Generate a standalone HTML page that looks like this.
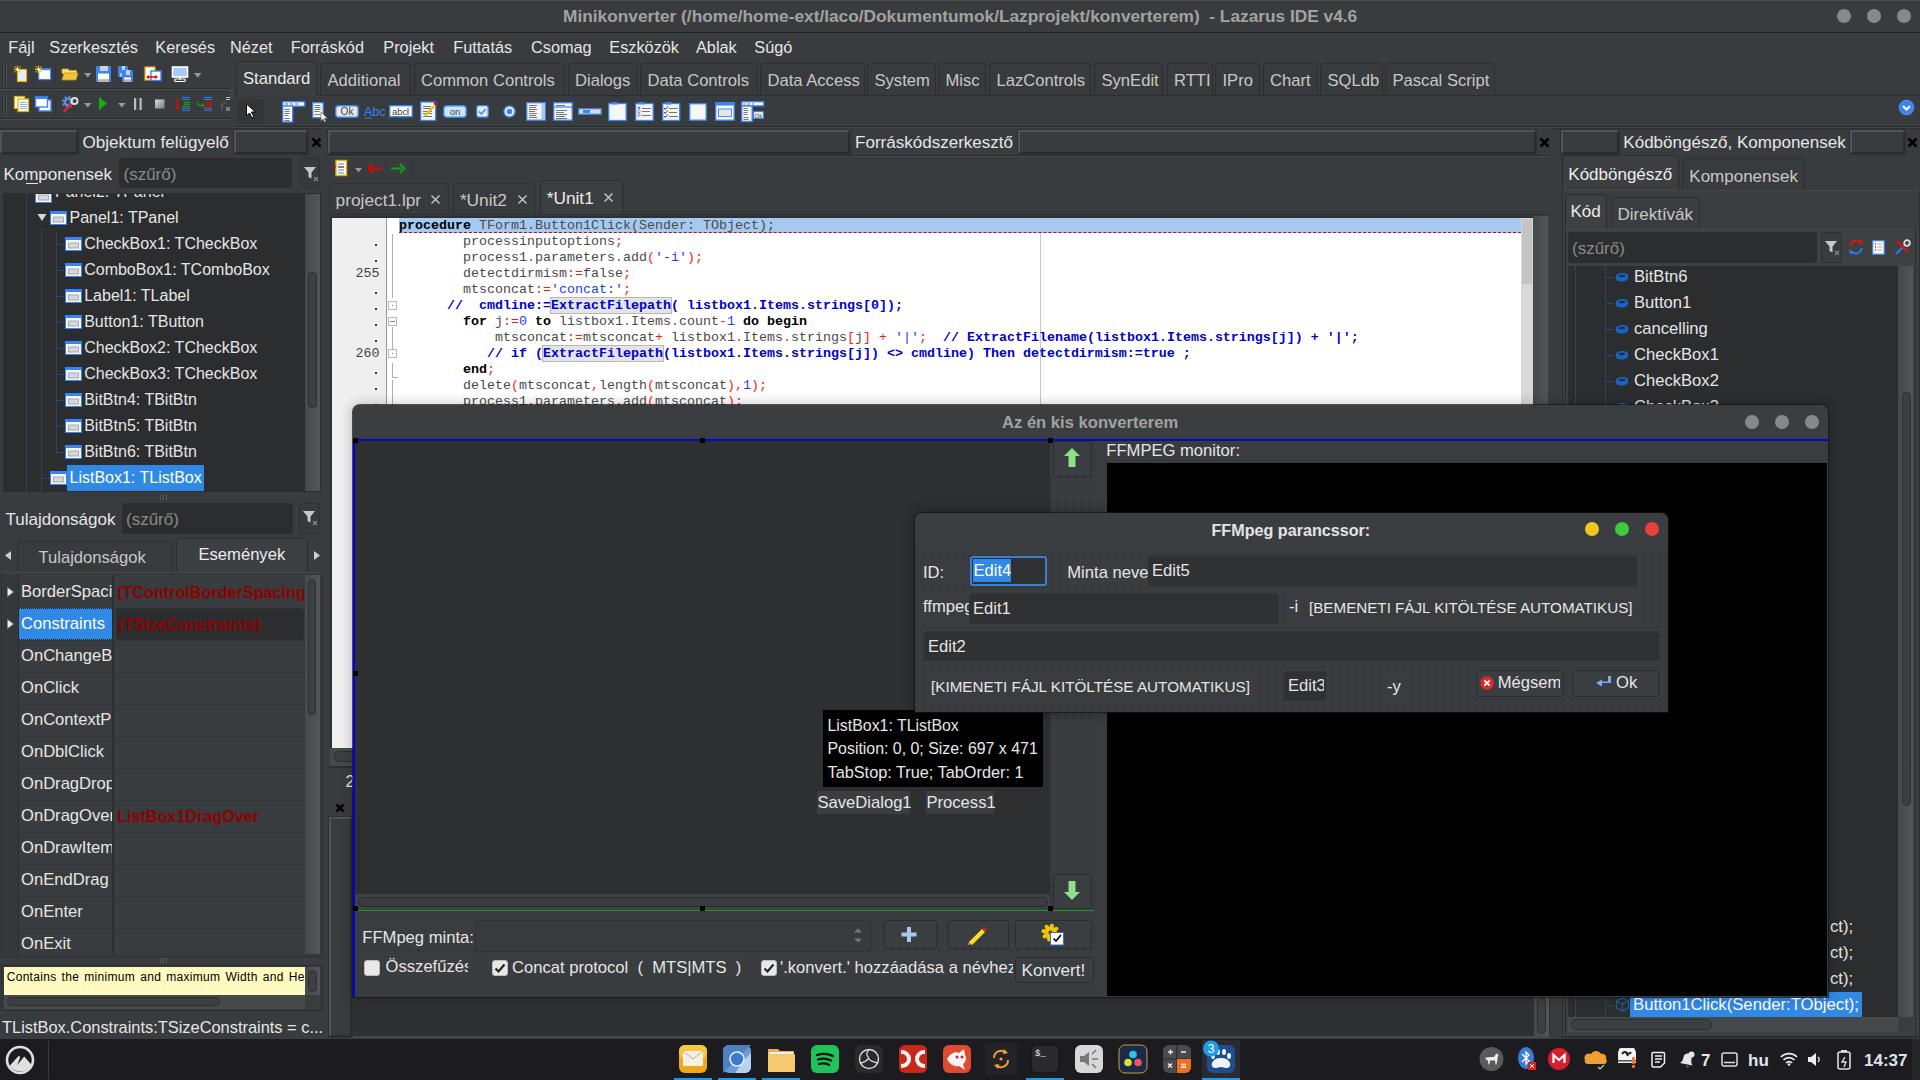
<!DOCTYPE html>
<html><head><meta charset="utf-8">
<style>
*{margin:0;padding:0;box-sizing:border-box}
html,body{width:1920px;height:1080px;overflow:hidden}
body{position:relative;background:#393c3e;font-family:"Liberation Sans",sans-serif;color:#e6e6e6;font-size:16px}
.a{position:absolute}
svg.a{overflow:visible}
.t{position:absolute;white-space:nowrap;line-height:1}
.m{position:absolute;white-space:pre;line-height:1;font-family:"Liberation Mono",monospace;font-size:13.33px;color:#2a2a2a}
.hb{position:absolute;border:2px solid #2a2c2e;border-top-color:#505456;border-left-color:#505456;background:#393c3e;outline:1px solid #2e3133}
.dots{background-color:#3a3d3f;background-image:radial-gradient(circle at 1px 1px,#151515 0.85px,transparent 1.15px);background-size:8px 8px}
.tab{position:absolute;background:#3a3d3f;border:1px solid #2c2e30;border-bottom:none;border-radius:4px 4px 0 0}
.circ{position:absolute;border-radius:50%}
.fld{position:absolute;background:#2b2d2f;border-radius:3px}
.btn{position:absolute;background:#3b3e40;border:1px solid #2a2c2e;border-radius:3px;box-shadow:inset 0 1px 0 #464a4c}
b{font-weight:bold}
</style></head><body>

<div class="a" style="left:0px;top:0px;width:1920px;height:1px;background:#4b4e50;"></div>
<div class="a" style="left:0px;top:32px;width:1920px;height:1px;background:#1f2123;"></div>
<div class="t" style="left:563px;top:8.3px;font-size:17.3px;color:#a2a2a2;font-weight:bold;">Minikonverter (/home/home-ext/laco/Dokumentumok/Lazprojekt/konverterem)  - Lazarus IDE v4.6</div>
<div class="circ" style="left:1837px;top:9px;width:14px;height:14px;background:#888"></div>
<div class="circ" style="left:1867px;top:9px;width:14px;height:14px;background:#888"></div>
<div class="circ" style="left:1897px;top:9px;width:14px;height:14px;background:#888"></div>
<div class="t" style="left:8.3px;top:39.0px;font-size:16.3px;">Fájl</div>
<div class="t" style="left:49.3px;top:39.0px;font-size:16.3px;">Szerkesztés</div>
<div class="t" style="left:155.3px;top:39.0px;font-size:16.3px;">Keresés</div>
<div class="t" style="left:230px;top:39.0px;font-size:16.3px;">Nézet</div>
<div class="t" style="left:290.7px;top:39.0px;font-size:16.3px;">Forráskód</div>
<div class="t" style="left:383.3px;top:39.0px;font-size:16.3px;">Projekt</div>
<div class="t" style="left:453.3px;top:39.0px;font-size:16.3px;">Futtatás</div>
<div class="t" style="left:531px;top:39.0px;font-size:16.3px;">Csomag</div>
<div class="t" style="left:609.3px;top:39.0px;font-size:16.3px;">Eszközök</div>
<div class="t" style="left:696px;top:39.0px;font-size:16.3px;">Ablak</div>
<div class="t" style="left:754.3px;top:39.0px;font-size:16.3px;">Súgó</div>
<div class="a" style="left:2px;top:62px;width:1px;height:24px;background:#2c2e30;"></div>
<div class="a" style="left:3px;top:62px;width:1px;height:24px;background:#4a4e50;"></div>
<div class="a" style="left:5px;top:62px;width:1px;height:24px;background:#2c2e30;"></div>
<div class="a" style="left:6px;top:62px;width:1px;height:24px;background:#4a4e50;"></div>
<div class="a" style="left:2px;top:92px;width:1px;height:24px;background:#2c2e30;"></div>
<div class="a" style="left:3px;top:92px;width:1px;height:24px;background:#4a4e50;"></div>
<div class="a" style="left:5px;top:92px;width:1px;height:24px;background:#2c2e30;"></div>
<div class="a" style="left:6px;top:92px;width:1px;height:24px;background:#4a4e50;"></div>
<div class="a" style="left:0px;top:88px;width:230px;height:1px;background:#2a2c2e;"></div>
<div class="a" style="left:0px;top:89px;width:230px;height:1px;background:#4a4e50;"></div>
<div class="a" style="left:0px;top:118px;width:230px;height:1px;background:#2a2c2e;"></div>
<div class="a" style="left:0px;top:119px;width:230px;height:1px;background:#4a4e50;"></div>
<div class="a" style="left:55px;top:64px;width:1px;height:22px;background:#333638;"></div>
<div class="a" style="left:138px;top:64px;width:1px;height:22px;background:#333638;"></div>
<div class="a" style="left:165px;top:64px;width:1px;height:22px;background:#333638;"></div>
<div class="a" style="left:55px;top:94px;width:1px;height:22px;background:#333638;"></div>
<svg class="a" style="left:13px;top:65px;" width="16" height="18" viewBox="0 0 16 18"><rect x="4.5" y="4.5" width="9" height="12" fill="#e6eefa" stroke="#e6b000" stroke-width="1.2"/><path d="M0.8000000000000003 4.4H8.0M4.4 0.8000000000000003V8.0" stroke="#e8b800" stroke-width="1.3"/><circle cx="2.1000000000000005" cy="2.1000000000000005" r="0.8" fill="#e8b800"/><circle cx="6.7" cy="2.1000000000000005" r="0.8" fill="#e8b800"/><circle cx="2.1000000000000005" cy="6.7" r="0.8" fill="#e8b800"/><circle cx="6.7" cy="6.7" r="0.8" fill="#e8b800"/><circle cx="4.4" cy="4.4" r="1.3" fill="#fff8d0"/></svg>
<svg class="a" style="left:34px;top:65px;" width="18" height="16" viewBox="0 0 18 16"><rect x="4.6" y="3.6" width="12" height="11" fill="#fff" stroke="#3a83f5" stroke-width="1.2"/><rect x="4" y="3" width="13" height="2.2" fill="#3a83f5"/><path d="M0.8999999999999999 4.4H8.1M4.5 0.8000000000000003V8.0" stroke="#e8b800" stroke-width="1.3"/><circle cx="2.2" cy="2.1000000000000005" r="0.8" fill="#e8b800"/><circle cx="6.8" cy="2.1000000000000005" r="0.8" fill="#e8b800"/><circle cx="2.2" cy="6.7" r="0.8" fill="#e8b800"/><circle cx="6.8" cy="6.7" r="0.8" fill="#e8b800"/><circle cx="4.5" cy="4.4" r="1.3" fill="#fff8d0"/></svg>
<svg class="a" style="left:61px;top:67px;" width="18" height="14" viewBox="0 0 18 14"><path d="M1 2h6l1.5 1.5h7v3H1z" fill="#f3dc8a" stroke="#d9a800" stroke-width="0.8"/><path d="M1 13l2-7h14l-2 7z" fill="#ecc440" stroke="#c99a00" stroke-width="0.8"/></svg>
<svg class="a" style="left:83.75px;top:73.25px;" width="7.5" height="4.5" viewBox="0 0 7.5 4.5"><path d="M0 0L7.5 0L3.75 4.5Z" fill="#9a9a9a"/></svg>
<svg class="a" style="left:95px;top:65px;" width="17" height="18" viewBox="0 0 17 18"><rect x="1" y="1" width="15" height="16" rx="1" fill="#3a83f5"/><rect x="5" y="1" width="8" height="5" fill="#cfd3d8"/><rect x="3" y="8.5" width="11" height="8" fill="#fff"/><rect x="3" y="14.5" width="11" height="1.2" fill="#f07020"/></svg>
<svg class="a" style="left:117px;top:65px;" width="17" height="18" viewBox="0 0 17 18"><rect x="1" y="1" width="10" height="11" rx="1" fill="#3a83f5"/><rect x="5" y="1" width="3" height="5" fill="#cfd3d8"/><rect x="3" y="8.5" width="6" height="3" fill="#fff"/><rect x="3" y="9.5" width="6" height="1.2" fill="#f07020"/><rect x="5" y="5" width="11" height="12" rx="1" fill="#3a83f5"/><rect x="9" y="5" width="4" height="5" fill="#cfd3d8"/><rect x="7" y="12.5" width="7" height="4" fill="#fff"/><rect x="7" y="14.5" width="7" height="1.2" fill="#f07020"/></svg>
<svg class="a" style="left:144px;top:66px;" width="18" height="16" viewBox="0 0 18 16"><rect x="1" y="1" width="10" height="13" fill="#fff" stroke="#e6b000" stroke-width="1.2"/><rect x="7" y="5" width="10" height="9.5" fill="#fff" stroke="#3a83f5" stroke-width="1.4"/><path d="M3 11h10" stroke="#e00" stroke-width="1.5"/><path d="M2 11l3-2v4zM14 11l-3-2v4z" fill="#e00"/></svg>
<svg class="a" style="left:171px;top:66px;" width="18" height="16" viewBox="0 0 18 16"><rect x="1.5" y="1" width="15" height="10" fill="#a8c8f8" stroke="#fff" stroke-width="1.6"/><path d="M9 11v2.5" stroke="#fff" stroke-width="1.5"/><rect x="3.5" y="13" width="11" height="2.5" rx="1.2" fill="none" stroke="#fff" stroke-width="1.2"/></svg>
<svg class="a" style="left:193.75px;top:73.25px;" width="7.5" height="4.5" viewBox="0 0 7.5 4.5"><path d="M0 0L7.5 0L3.75 4.5Z" fill="#9a9a9a"/></svg>
<svg class="a" style="left:13px;top:95px;" width="17" height="18" viewBox="0 0 17 18"><rect x="1.5" y="1.5" width="10" height="12" fill="#fff" stroke="#e6b000" stroke-width="1.3"/><rect x="5" y="4" width="10.5" height="12.5" fill="#fff" stroke="#e6b000" stroke-width="1.3"/><path d="M7 7.5h7M7 9.5h7M7 11.5h7M7 13.5h7" stroke="#6a9ef0" stroke-width="0.8"/></svg>
<svg class="a" style="left:34px;top:95px;" width="18" height="17" viewBox="0 0 18 17"><rect x="5" y="5" width="12" height="11" fill="#fff" stroke="#3a83f5" stroke-width="1.4"/><rect x="1.5" y="2" width="12" height="10" fill="#fff" stroke="#3a83f5" stroke-width="1.4"/><rect x="1" y="1.5" width="13" height="2.5" fill="#3a83f5"/></svg>
<svg class="a" style="left:61px;top:95px;" width="18" height="18" viewBox="0 0 18 18"><circle cx="7" cy="7" r="4.5" fill="none" stroke="#5a92e8" stroke-width="3" stroke-dasharray="2 1.5"/><circle cx="7" cy="7" r="3" fill="none" stroke="#5a92e8" stroke-width="2"/><path d="M3.5 16l8-8" stroke="#e0202a" stroke-width="2.6" stroke-linecap="round"/><circle cx="13.5" cy="6" r="3" fill="none" stroke="#ddd" stroke-width="2"/></svg>
<svg class="a" style="left:83.75px;top:103.25px;" width="7.5" height="4.5" viewBox="0 0 7.5 4.5"><path d="M0 0L7.5 0L3.75 4.5Z" fill="#9a9a9a"/></svg>
<svg class="a" style="left:98px;top:96px;" width="10" height="15" viewBox="0 0 10 15"><path d="M1 1l8 6.5-8 6.5z" fill="#10b010"/></svg>
<svg class="a" style="left:117.75px;top:103.25px;" width="7.5" height="4.5" viewBox="0 0 7.5 4.5"><path d="M0 0L7.5 0L3.75 4.5Z" fill="#9a9a9a"/></svg>
<svg class="a" style="left:133px;top:97px;" width="10" height="14" viewBox="0 0 10 14"><rect x="1" y="1" width="2.2" height="12" fill="#bbb"/><rect x="6.5" y="1" width="2.2" height="12" fill="#bbb"/></svg>
<svg class="a" style="left:154px;top:98px;" width="12" height="12" viewBox="0 0 12 12"><defs><linearGradient id="gst" x1="0" y1="0" x2="1" y2="1"><stop offset="0" stop-color="#ddd"/><stop offset="1" stop-color="#777"/></linearGradient></defs><rect x="1" y="1.5" width="9.5" height="9" fill="url(#gst)"/></svg>
<svg class="a" style="left:174px;top:96px;" width="18" height="16" viewBox="0 0 18 16"><path d="M3.5 1v12" stroke="#e00" stroke-width="1.3"/><path d="M1 10l2.5 4 2.5-4z" fill="#e00"/><path d="M8 1.5h8M8 3.5h8" stroke="#2f7af0" stroke-width="1.1"/><path d="M10 6.2h6M10 8.2h6M8 10.2h8" stroke="#10b010" stroke-width="1.1"/><path d="M8 12.2h8M8 14.2h8" stroke="#2f7af0" stroke-width="1.1"/></svg>
<svg class="a" style="left:196px;top:96px;" width="18" height="16" viewBox="0 0 18 16"><path d="M1 6c1 4 4 4 6 3" stroke="#10a010" stroke-width="1.3" fill="none"/><path d="M6 7l3 2-3 2z" fill="#10a010"/><path d="M8 1.5h8M8 3.5h8" stroke="#2f7af0" stroke-width="1.1"/><path d="M10 6.2h6M10 8.2h6M8 10.2h8" stroke="#e00" stroke-width="1.1"/><path d="M8 12.2h8M8 14.2h8" stroke="#2f7af0" stroke-width="1.1"/></svg>
<svg class="a" style="left:218px;top:96px;" width="13" height="16" viewBox="0 0 13 16"><path d="M4 14v-4c0-2 2-3 4-3" stroke="#666" stroke-width="1.1" fill="none"/><path d="M8 1.5h4M8 3.5h4M8 12h4M8 14h4" stroke="#bbb" stroke-width="1.1"/></svg>
<div class="a" style="left:230px;top:91px;width:3px;height:1px;background:#555;"></div>
<div class="a" style="left:230px;top:94px;width:3px;height:1px;background:#555;"></div>
<div class="a" style="left:230px;top:97px;width:3px;height:1px;background:#555;"></div>
<div class="a" style="left:234px;top:95px;width:1686px;height:1px;background:#2c2e30;"></div>
<div class="a" style="left:234px;top:126px;width:1686px;height:1px;background:#2a2c2e;"></div>
<div class="a" style="left:234px;top:127px;width:1686px;height:1px;background:#45494b;"></div>
<div class="tab" style="left:236px;top:61px;width:81px;height:35px;background:#3b3e40;border-color:#2a2c2e"></div>
<div class="t" style="left:243px;top:71.4px;font-size:16.6px;color:#ececec;">Standard</div>
<div class="tab" style="left:320px;top:63px;width:90.5px;height:32px;background:#383b3d"></div>
<div class="t" style="left:327.5px;top:73.4px;font-size:16.6px;color:#c8c8c8;">Additional</div>
<div class="tab" style="left:413.5px;top:63px;width:151.0px;height:32px;background:#383b3d"></div>
<div class="t" style="left:421.0px;top:73.4px;font-size:16.6px;color:#c8c8c8;">Common Controls</div>
<div class="tab" style="left:567.5px;top:63px;width:70.0px;height:32px;background:#383b3d"></div>
<div class="t" style="left:575.0px;top:73.4px;font-size:16.6px;color:#c8c8c8;">Dialogs</div>
<div class="tab" style="left:640px;top:63px;width:118px;height:32px;background:#383b3d"></div>
<div class="t" style="left:647.5px;top:73.4px;font-size:16.6px;color:#c8c8c8;">Data Controls</div>
<div class="tab" style="left:760px;top:63px;width:104.5px;height:32px;background:#383b3d"></div>
<div class="t" style="left:767.5px;top:73.4px;font-size:16.6px;color:#c8c8c8;">Data Access</div>
<div class="tab" style="left:867px;top:63px;width:68.5px;height:32px;background:#383b3d"></div>
<div class="t" style="left:874.5px;top:73.4px;font-size:16.6px;color:#c8c8c8;">System</div>
<div class="tab" style="left:938px;top:63px;width:48px;height:32px;background:#383b3d"></div>
<div class="t" style="left:945.5px;top:73.4px;font-size:16.6px;color:#c8c8c8;">Misc</div>
<div class="tab" style="left:989px;top:63px;width:102px;height:32px;background:#383b3d"></div>
<div class="t" style="left:996.5px;top:73.4px;font-size:16.6px;color:#c8c8c8;">LazControls</div>
<div class="tab" style="left:1094px;top:63px;width:69px;height:32px;background:#383b3d"></div>
<div class="t" style="left:1101.5px;top:73.4px;font-size:16.6px;color:#c8c8c8;">SynEdit</div>
<div class="tab" style="left:1166.5px;top:63px;width:46.0px;height:32px;background:#383b3d"></div>
<div class="t" style="left:1174.0px;top:73.4px;font-size:16.6px;color:#c8c8c8;">RTTI</div>
<div class="tab" style="left:1215px;top:63px;width:44.5px;height:32px;background:#383b3d"></div>
<div class="t" style="left:1222.5px;top:73.4px;font-size:16.6px;color:#c8c8c8;">IPro</div>
<div class="tab" style="left:1262.5px;top:63px;width:55.0px;height:32px;background:#383b3d"></div>
<div class="t" style="left:1270.0px;top:73.4px;font-size:16.6px;color:#c8c8c8;">Chart</div>
<div class="tab" style="left:1320px;top:63px;width:62.5px;height:32px;background:#383b3d"></div>
<div class="t" style="left:1327.5px;top:73.4px;font-size:16.6px;color:#c8c8c8;">SQLdb</div>
<div class="tab" style="left:1385px;top:63px;width:109.5px;height:32px;background:#383b3d"></div>
<div class="t" style="left:1392.5px;top:73.4px;font-size:16.6px;color:#c8c8c8;">Pascal Script</div>
<div class="a" style="left:238px;top:99px;width:26px;height:25px;background:#333638;border-radius:3px"></div>
<svg class="a" style="left:245px;top:103px;" width="12" height="16" viewBox="0 0 12 16"><path d="M1.5 1v12l3-3 2.5 5 2-1-2.5-5h4z" fill="#fff" stroke="#000" stroke-width="1"/></svg>
<svg class="a" style="left:282px;top:101px;" width="24" height="22" viewBox="0 0 24 22"><rect x="0.7" y="0.7" width="22" height="4.5" fill="#f6f6f6" stroke="#3a83f5" stroke-width="1.3"/><path d="M3 3h3M8 3h3M13 3h3" stroke="#777" stroke-width="1"/><rect x="0.7" y="5" width="10" height="16" fill="#f6f6f6" stroke="#3a83f5" stroke-width="1.3"/><path d="M2.5 8.5h5M2.5 10.5h5M2.5 12.5h5M2.5 14.5h4M2.5 17.5h5M2.5 19.5h5" stroke="#777" stroke-width="1"/></svg>
<svg class="a" style="left:312px;top:102px;" width="16" height="21" viewBox="0 0 16 21"><rect x="0.7" y="0.7" width="10.5" height="15" fill="#f6f6f6" stroke="#3a83f5" stroke-width="1.3"/><path d="M2.5 3.5h6M2.5 5.5h6M2.5 7.5h6M2.5 9.5h5M2.5 12.5h6" stroke="#777" stroke-width="1"/><path d="M9 10v9l2-2 1.5 3 1.3-.7-1.5-3h3z" fill="#fff" stroke="#666" stroke-width="0.7"/></svg>
<svg class="a" style="left:335px;top:105px;" width="24" height="13" viewBox="0 0 24 13"><rect x="0.7" y="0.7" width="22.5" height="11.5" rx="2.5" fill="#e8e8e8" stroke="#3a83f5" stroke-width="1.4"/><text x="12" y="10.3" font-family="Liberation Sans" font-size="10" text-anchor="middle" fill="#444">Ok</text></svg>
<svg class="a" style="left:364px;top:104px;" width="20" height="15" viewBox="0 0 20 15"><text x="0" y="11.5" font-family="Liberation Sans" font-size="12.5" fill="#3a83f5">Abc</text><path d="M0.5 14h7" stroke="#3a83f5" stroke-width="1"/></svg>
<svg class="a" style="left:389px;top:105px;" width="24" height="13" viewBox="0 0 24 13"><rect x="0.7" y="0.7" width="22.5" height="11" fill="#fff" stroke="#3a83f5" stroke-width="1.4"/><text x="3" y="9.5" font-family="Liberation Sans" font-size="9.5" fill="#444">abc</text><path d="M19 3v7" stroke="#444" stroke-width="1"/></svg>
<svg class="a" style="left:420px;top:101px;" width="18" height="20" viewBox="0 0 18 20"><rect x="0.7" y="1" width="15" height="18.5" fill="#f6f6f6" stroke="#3a83f5" stroke-width="1.3"/><path d="M3 5.5h8M3 7.5h8M3 10.5h9M3 12.5h9M3 15.5h9" stroke="#777" stroke-width="1"/><path d="M5 15l9-10" stroke="#e8c800" stroke-width="2.4"/><circle cx="15.5" cy="2.5" r="1.8" fill="#e01010"/></svg>
<svg class="a" style="left:443px;top:105px;" width="24" height="13" viewBox="0 0 24 13"><rect x="0.7" y="0.7" width="22.5" height="11.5" rx="3" fill="#cfe4fb" stroke="#3a83f5" stroke-width="1.4"/><text x="12" y="9.8" font-family="Liberation Sans" font-size="9.5" text-anchor="middle" fill="#444">on</text></svg>
<svg class="a" style="left:476px;top:105px;" width="13" height="13" viewBox="0 0 13 13"><rect x="0.7" y="0.7" width="11.5" height="11.5" rx="2" fill="#e8e8e8" stroke="#3a83f5" stroke-width="1.3"/><path d="M3 6.5l2.3 2.5 4.5-5" stroke="#3a83f5" stroke-width="1.5" fill="none"/></svg>
<svg class="a" style="left:503px;top:105px;" width="13" height="13" viewBox="0 0 13 13"><circle cx="6.5" cy="6.5" r="5.6" fill="#e8e8e8" stroke="#3a83f5" stroke-width="1.3"/><circle cx="6.5" cy="6.5" r="2.7" fill="#3a83f5"/></svg>
<svg class="a" style="left:526px;top:102px;" width="20" height="19" viewBox="0 0 20 19"><rect x="0.7" y="0.7" width="18.5" height="17.5" fill="#f6f6f6" stroke="#3a83f5" stroke-width="1.3"/><rect x="15.5" y="1" width="3.5" height="17" fill="#a8c6f5"/><path d="M3 3.5h8M3 5.5h7M3 7.5h8M3 9.5h6M3 11.5h8M3 13.5h7M3 15.5h8" stroke="#777" stroke-width="1"/></svg>
<svg class="a" style="left:553px;top:102px;" width="20" height="19" viewBox="0 0 20 19"><rect x="0.7" y="0.7" width="18.5" height="17.5" fill="#f6f6f6" stroke="#3a83f5" stroke-width="1.3"/><path d="M1 5h18" stroke="#3a83f5" stroke-width="1.2"/><path d="M3 3.5h9M3 8.5h11M3 10.5h8M3 12.5h11M3 14.5h9M3 16.5h11" stroke="#777" stroke-width="1"/></svg>
<svg class="a" style="left:578px;top:108px;" width="24" height="7" viewBox="0 0 24 7"><rect x="0.7" y="0.7" width="22.5" height="5.5" fill="#dcdcdc" stroke="#3a83f5" stroke-width="1.3"/><rect x="5" y="2" width="7" height="3" fill="#3a83f5"/></svg>
<svg class="a" style="left:608px;top:102px;" width="19" height="19" viewBox="0 0 19 19"><rect x="0.7" y="1.5" width="17.5" height="17" fill="#f6f6f6" stroke="#3a83f5" stroke-width="1.3"/><rect x="3" y="0" width="7" height="2.5" rx="1" fill="#3a83f5"/></svg>
<svg class="a" style="left:635px;top:102px;" width="19" height="19" viewBox="0 0 19 19"><rect x="0.7" y="1.5" width="17.5" height="17" fill="#f6f6f6" stroke="#3a83f5" stroke-width="1.3"/><rect x="3" y="0" width="7" height="2.5" rx="1" fill="#3a83f5"/><circle cx="4" cy="6" r="1.3" fill="#3a83f5"/><circle cx="4" cy="9.5" r="1.3" fill="none" stroke="#777" stroke-width="0.7"/><circle cx="4" cy="13" r="1.3" fill="none" stroke="#777" stroke-width="0.7"/><path d="M7 6.5h9M7 9.5h8M7 13.5h9" stroke="#777" stroke-width="1"/></svg>
<svg class="a" style="left:662px;top:102px;" width="18" height="19" viewBox="0 0 18 19"><rect x="0.7" y="1.5" width="17" height="17" fill="#f6f6f6" stroke="#3a83f5" stroke-width="1.3"/><rect x="3" y="0" width="7" height="2.5" rx="1" fill="#3a83f5"/><path d="M2 6l1.3 1.5 2.5-3M2 10l1.3 1.5 2.5-3M2 14l1.3 1.5 2.5-3" stroke="#333" stroke-width="1" fill="none"/><path d="M7 6.5h9M7 10.5h8M7 14.5h9" stroke="#777" stroke-width="1"/></svg>
<svg class="a" style="left:689px;top:103px;" width="18" height="18" viewBox="0 0 18 18"><rect x="0.7" y="0.7" width="16.5" height="16.5" fill="#f6f6f6" stroke="#3a83f5" stroke-width="1.3"/></svg>
<svg class="a" style="left:715px;top:102px;" width="20" height="19" viewBox="0 0 20 19"><rect x="0.7" y="0.7" width="18.5" height="17.5" fill="#f6f6f6" stroke="#3a83f5" stroke-width="1.3"/><rect x="0" y="0" width="20" height="3.5" rx="1" fill="#3a83f5"/><rect x="3.5" y="7" width="13" height="7.5" fill="#e6e6e6" stroke="#3a83f5" stroke-width="0.9"/></svg>
<svg class="a" style="left:741px;top:101px;" width="23" height="21" viewBox="0 0 23 21"><rect x="0.7" y="0.7" width="22" height="4.2" fill="#f6f6f6" stroke="#3a83f5" stroke-width="1.3"/><path d="M2.5 3h2M6 3h3M11 3h2" stroke="#777" stroke-width="1"/><rect x="0.7" y="5" width="10.5" height="15.5" fill="#f6f6f6" stroke="#3a83f5" stroke-width="1.3"/><path d="M2.5 7.5h4M2.5 9.5h5M2.5 11.5h4M2.5 13.5h4M2.5 16.5h5M2.5 18.5h5" stroke="#777" stroke-width="1"/><rect x="12.5" y="10.5" width="10" height="7" fill="#e6e6e6" stroke="#3a83f5" stroke-width="1"/><text x="13.5" y="16.5" font-family="Liberation Sans" font-size="6" fill="#555">Ok</text></svg>
<svg class="a" style="left:1898px;top:99px;" width="17" height="17" viewBox="0 0 17 17"><circle cx="8.5" cy="8.5" r="7.8" fill="#4a8df0"/><circle cx="8.5" cy="8.5" r="6.5" fill="#3d84f0"/><path d="M5 7l3.5 3.5L12 7" stroke="#fff" stroke-width="2" fill="none"/></svg>
<div class="a" style="left:0px;top:128px;width:322px;height:1px;background:#2e3032;"></div>
<div class="hb" style="left:0px;top:130px;width:78px;height:24px"></div>
<div class="t" style="left:82.5px;top:133.6px;font-size:17.1px;">Objektum felügyelő</div>
<div class="hb" style="left:234px;top:130px;width:74px;height:24px"></div>
<svg class="a" style="left:311px;top:137px;" width="11" height="11" viewBox="0 0 11 11"><path d="M1.5 1.5L9.5 9.5M9.5 1.5L1.5 9.5" stroke="#000" stroke-width="2.6"/></svg>
<div class="t" style="left:3.4px;top:165.7px;font-size:17px;">Komponensek</div>
<div class="a" style="left:26px;top:183px;width:12px;height:1px;background:#e6e6e6;"></div>
<div class="fld" style="left:119px;top:158px;width:173px;height:30px"></div>
<div class="t" style="left:123.5px;top:165.7px;font-size:17px;color:#8a8a8a;">(szűrő)</div>
<div class="a" style="left:300px;top:158px;width:20px;height:30px;background:#363a3c;border:1px solid #2e3032;border-radius:3px"></div>
<svg class="a" style="left:302px;top:165px;" width="18" height="18" viewBox="0 0 18 18"><path d="M2 2h12l-4.5 5.5v6l-3-1.5v-4.5z" fill="#c8c8c8"/><path d="M12 12l4 4M16 12l-4 4" stroke="#888" stroke-width="1.1"/></svg>
<div class="a" style="left:3px;top:193px;width:318px;height:299px;background:#2b2d2f;"></div>
<div class="a" style="left:305px;top:194px;width:15px;height:297px;background:linear-gradient(to right,#45494b,#52565a);"></div>
<div class="a" style="left:308px;top:272px;width:9px;height:136px;background:#3c4042;border:1px solid #2c2e30;border-radius:5px"></div>
<div class="a" style="left:26px;top:194px;width:1px;height:297px;border-left:1px dotted #2a5a9a"></div>
<div class="a" style="left:41px;top:228px;width:1px;height:263px;border-left:1px dotted #2a5a9a"></div>
<div class="a" style="left:56px;top:232px;width:1px;height:221px;border-left:1px dotted #2a5a9a"></div>
<div class="a" style="left:3px;top:194px;width:300px;height:297px;overflow:hidden">
<svg class="a" style="left:32px;top:-5px;" width="17" height="14" viewBox="0 0 17 14"><rect x="0.5" y="0.5" width="16" height="13" fill="#f4f6fa" stroke="#3a83f5" stroke-width="1"/><rect x="3.5" y="6" width="10" height="5" fill="#d6d8dc" stroke="#9a9ca0" stroke-width="0.8"/></svg>
<div class="t" style="left:52px;top:-9.8px;font-size:16px;">Panel2: TPanel</div>
</div>
<svg class="a" style="left:37px;top:213px;" width="10" height="9" viewBox="0 0 10 9"><path d="M0.5 1h9l-4.5 7z" fill="#d8d8d8"/></svg>
<svg class="a" style="left:50px;top:211px;" width="17" height="14" viewBox="0 0 17 14"><rect x="0.5" y="0.5" width="16" height="13" fill="#f4f6fa" stroke="#3a83f5" stroke-width="1"/><rect x="0" y="0" width="17" height="3" fill="#3a83f5"/><rect x="3.5" y="6" width="10" height="5" fill="#d6d8dc" stroke="#9a9ca0" stroke-width="0.8"/></svg>
<div class="t" style="left:69.5px;top:210.2px;font-size:16px;">Panel1: TPanel</div>
<div class="a" style="left:57px;top:244px;width:7px;height:1px;border-top:1px dotted #2a5a9a"></div>
<svg class="a" style="left:65px;top:237px;" width="17" height="14" viewBox="0 0 17 14"><rect x="0.5" y="0.5" width="16" height="13" fill="#f4f6fa" stroke="#3a83f5" stroke-width="1"/><rect x="0" y="0" width="17" height="3" fill="#3a83f5"/><rect x="3.5" y="6" width="10" height="5" fill="#d6d8dc" stroke="#9a9ca0" stroke-width="0.8"/></svg>
<div class="t" style="left:84.2px;top:236.2px;font-size:16px;">CheckBox1: TCheckBox</div>
<div class="a" style="left:57px;top:270px;width:7px;height:1px;border-top:1px dotted #2a5a9a"></div>
<svg class="a" style="left:65px;top:263px;" width="17" height="14" viewBox="0 0 17 14"><rect x="0.5" y="0.5" width="16" height="13" fill="#f4f6fa" stroke="#3a83f5" stroke-width="1"/><rect x="0" y="0" width="17" height="3" fill="#3a83f5"/><rect x="3.5" y="6" width="10" height="5" fill="#d6d8dc" stroke="#9a9ca0" stroke-width="0.8"/></svg>
<div class="t" style="left:84.2px;top:262.2px;font-size:16px;">ComboBox1: TComboBox</div>
<div class="a" style="left:57px;top:296px;width:7px;height:1px;border-top:1px dotted #2a5a9a"></div>
<svg class="a" style="left:65px;top:289px;" width="17" height="14" viewBox="0 0 17 14"><rect x="0.5" y="0.5" width="16" height="13" fill="#f4f6fa" stroke="#3a83f5" stroke-width="1"/><rect x="0" y="0" width="17" height="3" fill="#3a83f5"/><rect x="3.5" y="6" width="10" height="5" fill="#d6d8dc" stroke="#9a9ca0" stroke-width="0.8"/></svg>
<div class="t" style="left:84.2px;top:288.2px;font-size:16px;">Label1: TLabel</div>
<div class="a" style="left:57px;top:322px;width:7px;height:1px;border-top:1px dotted #2a5a9a"></div>
<svg class="a" style="left:65px;top:315px;" width="17" height="14" viewBox="0 0 17 14"><rect x="0.5" y="0.5" width="16" height="13" fill="#f4f6fa" stroke="#3a83f5" stroke-width="1"/><rect x="0" y="0" width="17" height="3" fill="#3a83f5"/><rect x="3.5" y="6" width="10" height="5" fill="#d6d8dc" stroke="#9a9ca0" stroke-width="0.8"/></svg>
<div class="t" style="left:84.2px;top:314.2px;font-size:16px;">Button1: TButton</div>
<div class="a" style="left:57px;top:348px;width:7px;height:1px;border-top:1px dotted #2a5a9a"></div>
<svg class="a" style="left:65px;top:341px;" width="17" height="14" viewBox="0 0 17 14"><rect x="0.5" y="0.5" width="16" height="13" fill="#f4f6fa" stroke="#3a83f5" stroke-width="1"/><rect x="0" y="0" width="17" height="3" fill="#3a83f5"/><rect x="3.5" y="6" width="10" height="5" fill="#d6d8dc" stroke="#9a9ca0" stroke-width="0.8"/></svg>
<div class="t" style="left:84.2px;top:340.2px;font-size:16px;">CheckBox2: TCheckBox</div>
<div class="a" style="left:57px;top:374px;width:7px;height:1px;border-top:1px dotted #2a5a9a"></div>
<svg class="a" style="left:65px;top:367px;" width="17" height="14" viewBox="0 0 17 14"><rect x="0.5" y="0.5" width="16" height="13" fill="#f4f6fa" stroke="#3a83f5" stroke-width="1"/><rect x="0" y="0" width="17" height="3" fill="#3a83f5"/><rect x="3.5" y="6" width="10" height="5" fill="#d6d8dc" stroke="#9a9ca0" stroke-width="0.8"/></svg>
<div class="t" style="left:84.2px;top:366.2px;font-size:16px;">CheckBox3: TCheckBox</div>
<div class="a" style="left:57px;top:400px;width:7px;height:1px;border-top:1px dotted #2a5a9a"></div>
<svg class="a" style="left:65px;top:393px;" width="17" height="14" viewBox="0 0 17 14"><rect x="0.5" y="0.5" width="16" height="13" fill="#f4f6fa" stroke="#3a83f5" stroke-width="1"/><rect x="0" y="0" width="17" height="3" fill="#3a83f5"/><rect x="3.5" y="6" width="10" height="5" fill="#d6d8dc" stroke="#9a9ca0" stroke-width="0.8"/></svg>
<div class="t" style="left:84.2px;top:392.2px;font-size:16px;">BitBtn4: TBitBtn</div>
<div class="a" style="left:57px;top:426px;width:7px;height:1px;border-top:1px dotted #2a5a9a"></div>
<svg class="a" style="left:65px;top:419px;" width="17" height="14" viewBox="0 0 17 14"><rect x="0.5" y="0.5" width="16" height="13" fill="#f4f6fa" stroke="#3a83f5" stroke-width="1"/><rect x="0" y="0" width="17" height="3" fill="#3a83f5"/><rect x="3.5" y="6" width="10" height="5" fill="#d6d8dc" stroke="#9a9ca0" stroke-width="0.8"/></svg>
<div class="t" style="left:84.2px;top:418.2px;font-size:16px;">BitBtn5: TBitBtn</div>
<div class="a" style="left:57px;top:452px;width:7px;height:1px;border-top:1px dotted #2a5a9a"></div>
<svg class="a" style="left:65px;top:445px;" width="17" height="14" viewBox="0 0 17 14"><rect x="0.5" y="0.5" width="16" height="13" fill="#f4f6fa" stroke="#3a83f5" stroke-width="1"/><rect x="0" y="0" width="17" height="3" fill="#3a83f5"/><rect x="3.5" y="6" width="10" height="5" fill="#d6d8dc" stroke="#9a9ca0" stroke-width="0.8"/></svg>
<div class="t" style="left:84.2px;top:444.2px;font-size:16px;">BitBtn6: TBitBtn</div>
<div class="a" style="left:42px;top:478px;width:7px;height:1px;border-top:1px dotted #2a5a9a"></div>
<div class="a" style="left:66.5px;top:465px;width:137px;height:26px;background:#3189e6;"></div>
<svg class="a" style="left:50px;top:471px;" width="17" height="14" viewBox="0 0 17 14"><rect x="0.5" y="0.5" width="16" height="13" fill="#f4f6fa" stroke="#3a83f5" stroke-width="1"/><rect x="0" y="0" width="17" height="3" fill="#3a83f5"/><rect x="3.5" y="6" width="10" height="5" fill="#d6d8dc" stroke="#9a9ca0" stroke-width="0.8"/></svg>
<div class="t" style="left:69.5px;top:470.2px;font-size:16px;color:#ffffff;">ListBox1: TListBox</div>
<div class="a" style="left:160px;top:495px;width:1px;height:5px;background:#555a5c;"></div>
<div class="a" style="left:163px;top:495px;width:1px;height:5px;background:#555a5c;"></div>
<div class="a" style="left:166px;top:495px;width:1px;height:5px;background:#555a5c;"></div>
<div class="t" style="left:5.5px;top:511.3px;font-size:17px;">Tulajdonságok</div>
<div class="fld" style="left:122px;top:503px;width:171px;height:31px"></div>
<div class="t" style="left:126px;top:510.7px;font-size:17px;color:#8a8a8a;">(szűrő)</div>
<div class="a" style="left:299px;top:503px;width:21px;height:31px;background:#363a3c;border:1px solid #2e3032;border-radius:3px"></div>
<svg class="a" style="left:301px;top:509px;" width="18" height="18" viewBox="0 0 18 18"><path d="M2 2h12l-4.5 5.5v6l-3-1.5v-4.5z" fill="#c8c8c8"/><path d="M12 12l4 4M16 12l-4 4" stroke="#888" stroke-width="1.1"/></svg>
<svg class="a" style="left:4px;top:550px;" width="8" height="11" viewBox="0 0 8 11"><path d="M7 1v9l-6-4.5z" fill="#cfcfcf"/></svg>
<svg class="a" style="left:313px;top:550px;" width="8" height="11" viewBox="0 0 8 11"><path d="M1 1v9l6-4.5z" fill="#cfcfcf"/></svg>
<div class="tab" style="left:16.5px;top:541px;width:156px;height:32px;background:#383b3d"></div>
<div class="t" style="left:38.5px;top:549.9px;font-size:16.6px;color:#c8c8c8;">Tulajdonságok</div>
<div class="tab" style="left:175.5px;top:537.5px;width:132px;height:36px;background:#3c3f41;border-color:#2a2c2e"></div>
<div class="t" style="left:198.5px;top:547.4px;font-size:16.6px;color:#ececec;">Események</div>
<div class="a" style="left:1px;top:572px;width:322px;height:385px;background:#363a3c;border:1px solid #2c2e30;border-top-color:#45494b"></div>
<div class="a" style="left:3px;top:575px;width:16px;height:379px;background:#35383a;"></div>
<div class="a" style="left:18px;top:575px;width:1px;height:379px;background:#2a2c2e;"></div>
<div class="a" style="left:19px;top:575px;width:93px;height:379px;background:#393c3e;"></div>
<div class="a" style="left:112px;top:575px;width:2px;height:379px;background:#2c2e30;"></div>
<div class="a" style="left:114px;top:575px;width:191px;height:379px;background:#393c3e;"></div>
<div class="a" style="left:305px;top:575px;width:15px;height:379px;background:linear-gradient(to right,#45494b,#52565a);"></div>
<div class="a" style="left:308px;top:579px;width:8px;height:136px;background:#3c4042;border:1px solid #2c2e30;border-radius:5px"></div>
<div class="a" style="left:19px;top:575px;width:286px;height:379px;overflow:hidden">
<div class="a" style="left:0;top:33px;width:286px;height:0;border-top:1px dotted #2a2c2e"></div>
<div class="a" style="left:0;top:65px;width:286px;height:0;border-top:1px dotted #2a2c2e"></div>
<div class="a" style="left:0;top:97px;width:286px;height:0;border-top:1px dotted #2a2c2e"></div>
<div class="a" style="left:0;top:129px;width:286px;height:0;border-top:1px dotted #2a2c2e"></div>
<div class="a" style="left:0;top:161px;width:286px;height:0;border-top:1px dotted #2a2c2e"></div>
<div class="a" style="left:0;top:193px;width:286px;height:0;border-top:1px dotted #2a2c2e"></div>
<div class="a" style="left:0;top:225px;width:286px;height:0;border-top:1px dotted #2a2c2e"></div>
<div class="a" style="left:0;top:257px;width:286px;height:0;border-top:1px dotted #2a2c2e"></div>
<div class="a" style="left:0;top:289px;width:286px;height:0;border-top:1px dotted #2a2c2e"></div>
<div class="a" style="left:0;top:321px;width:286px;height:0;border-top:1px dotted #2a2c2e"></div>
<div class="a" style="left:0;top:353px;width:286px;height:0;border-top:1px dotted #2a2c2e"></div>
<div class="a" style="left:0;top:33px;width:93px;height:32px;background:#3189e6;border-top:1px dotted #1a1a1a;border-bottom:1px dotted #1a1a1a"></div>
<div class="a" style="left:97px;top:34px;width:188px;height:31px;background:#2b2d2f;border-radius:3px"></div>
</div>
<div class="a" style="left:19px;top:575px;width:93px;height:379px;overflow:hidden">
<div class="t" style="left:2px;top:8.9px;font-size:16.6px;color:#e6e6e6;">BorderSpaci</div>
<div class="t" style="left:2px;top:40.9px;font-size:16.6px;color:#ffffff;">Constraints</div>
<div class="t" style="left:2px;top:72.9px;font-size:16.6px;color:#e6e6e6;">OnChangeB</div>
<div class="t" style="left:2px;top:104.9px;font-size:16.6px;color:#e6e6e6;">OnClick</div>
<div class="t" style="left:2px;top:136.9px;font-size:16.6px;color:#e6e6e6;">OnContextP</div>
<div class="t" style="left:2px;top:168.9px;font-size:16.6px;color:#e6e6e6;">OnDblClick</div>
<div class="t" style="left:2px;top:200.9px;font-size:16.6px;color:#e6e6e6;">OnDragDrop</div>
<div class="t" style="left:2px;top:232.9px;font-size:16.6px;color:#e6e6e6;">OnDragOver</div>
<div class="t" style="left:2px;top:264.9px;font-size:16.6px;color:#e6e6e6;">OnDrawItem</div>
<div class="t" style="left:2px;top:296.9px;font-size:16.6px;color:#e6e6e6;">OnEndDrag</div>
<div class="t" style="left:2px;top:328.9px;font-size:16.6px;color:#e6e6e6;">OnEnter</div>
<div class="t" style="left:2px;top:360.9px;font-size:16.6px;color:#e6e6e6;">OnExit</div>
</div>
<svg class="a" style="left:6px;top:586px;" width="9" height="12" viewBox="0 0 9 12"><path d="M1.5 1.5l6 4.5-6 4.5z" fill="#f0f0f0" stroke="#888" stroke-width="0.8"/></svg>
<svg class="a" style="left:6px;top:618px;" width="9" height="12" viewBox="0 0 9 12"><path d="M1.5 1.5l6 4.5-6 4.5z" fill="#f0f0f0" stroke="#888" stroke-width="0.8"/></svg>
<div class="a" style="left:114px;top:575px;width:190px;height:379px;overflow:hidden">
<div class="t" style="left:3px;top:9.1px;font-size:16.2px;color:#8e0000;font-weight:bold;">(TControlBorderSpacing</div>
<div class="t" style="left:4px;top:41.1px;font-size:16.2px;color:#8e0000;font-weight:bold;">(TSizeConstraints)</div>
<div class="t" style="left:3px;top:233.1px;font-size:16.2px;color:#8e0000;font-weight:bold;">ListBox1DragOver</div>
</div>
<div class="a" style="left:160px;top:958px;width:1px;height:5px;background:#555a5c;"></div>
<div class="a" style="left:163px;top:958px;width:1px;height:5px;background:#555a5c;"></div>
<div class="a" style="left:166px;top:958px;width:1px;height:5px;background:#555a5c;"></div>
<div class="a" style="left:1px;top:965px;width:322px;height:46px;background:#363a3c;border:1px solid #2c2e30"></div>
<div class="a" style="left:4px;top:967px;width:301px;height:28px;background:#fffbc0;"></div>
<div class="a" style="left:4px;top:967px;width:301px;height:28px;overflow:hidden">
<div class="t" style="left:2.7px;top:3.5px;font-size:12px;color:#000;letter-spacing:0.3px;word-spacing:1.5px">Contains the minimum and maximum Width and Height</div>
</div>
<div class="a" style="left:4px;top:995px;width:301px;height:14px;background:#45494b;"></div>
<div class="a" style="left:7px;top:997px;width:213px;height:9px;background:#3c4042;border:1px solid #2c2e30;border-radius:5px"></div>
<div class="a" style="left:305px;top:967px;width:15px;height:28px;background:linear-gradient(to right,#45494b,#52565a);"></div>
<div class="a" style="left:308px;top:970px;width:9px;height:22px;background:#3c4042;border:1px solid #2c2e30;border-radius:5px"></div>
<div class="a" style="left:305px;top:995px;width:15px;height:14px;background:#3a3d3f;"></div>
<div class="t" style="left:2px;top:1019.0px;font-size:16.4px;">TListBox.Constraints:TSizeConstraints = c...</div>
<div class="hb" style="left:328px;top:130px;width:522px;height:24px"></div>
<div class="t" style="left:855px;top:133.7px;font-size:17.05px;">Forráskódszerkesztő</div>
<div class="hb" style="left:1018px;top:130px;width:518px;height:24px"></div>
<svg class="a" style="left:1539px;top:137px;" width="11" height="11" viewBox="0 0 11 11"><path d="M1.5 1.5L9.5 9.5M9.5 1.5L1.5 9.5" stroke="#000" stroke-width="2.6"/></svg>
<div class="a" style="left:328px;top:155px;width:1222px;height:1px;background:#2c2e30;"></div>
<div class="a" style="left:328px;top:156px;width:1222px;height:1px;background:#45494b;"></div>
<svg class="a" style="left:333px;top:158.5px;" width="18" height="18" viewBox="0 0 18 18"><rect x="3" y="1.5" width="10.5" height="15" fill="#fff" stroke="#e6b000" stroke-width="1.4"/><path d="M5 5h6M5 8h6M5 11h6M5 14h6" stroke="#3a83f5" stroke-width="1"/><path d="M5 8h6" stroke="#e00" stroke-width="1"/><path d="M0 8h3" stroke="#e00" stroke-width="1.5"/></svg>
<svg class="a" style="left:354.5px;top:167.9px;" width="7" height="4.2" viewBox="0 0 7 4.2"><path d="M0 0L7 0L3.5 4.2Z" fill="#9a9a9a"/></svg>
<svg class="a" style="left:367px;top:163px;" width="16" height="11" viewBox="0 0 16 11"><path d="M15 5.5H4" stroke="#e00" stroke-width="2"/><path d="M6 1L1.5 5.5 6 10" stroke="#e00" stroke-width="2" fill="none"/></svg>
<svg class="a" style="left:390px;top:163px;" width="16" height="11" viewBox="0 0 16 11"><path d="M1 5.5h11" stroke="#10a010" stroke-width="2"/><path d="M10 1l4.5 4.5L10 10" stroke="#10a010" stroke-width="2" fill="none"/></svg>
<div class="a" style="left:411px;top:160px;width:1px;height:20px;background:#333638;"></div>
<div class="tab" style="left:329px;top:182.5px;width:120px;height:31.5px;background:#383b3d;border-color:#2f3133"></div>
<div class="t" style="left:335.6px;top:191.8px;font-size:17.3px;color:#c8c8c8;">project1.lpr</div>
<svg class="a" style="left:429.5px;top:194.3px;" width="11" height="11" viewBox="0 0 11 11"><path d="M1.5 1.5L9.5 9.5M9.5 1.5L1.5 9.5" stroke="#d0d0d0" stroke-width="1.15"/></svg>
<div class="tab" style="left:452.5px;top:182.5px;width:83.5px;height:31.5px;background:#383b3d;border-color:#2f3133"></div>
<div class="t" style="left:459.9px;top:191.8px;font-size:17.3px;color:#c8c8c8;">*Unit2</div>
<svg class="a" style="left:516.5px;top:194.3px;" width="11" height="11" viewBox="0 0 11 11"><path d="M1.5 1.5L9.5 9.5M9.5 1.5L1.5 9.5" stroke="#d0d0d0" stroke-width="1.15"/></svg>
<div class="tab" style="left:539.5px;top:180px;width:83.5px;height:34px;background:#3c3f41;border-color:#2a2c2e"></div>
<div class="t" style="left:546.7px;top:189.9px;font-size:17.3px;color:#ececec;">*Unit1</div>
<svg class="a" style="left:603px;top:192.4px;" width="11" height="11" viewBox="0 0 11 11"><path d="M1.5 1.5L9.5 9.5M9.5 1.5L1.5 9.5" stroke="#d0d0d0" stroke-width="1.15"/></svg>
<div class="a" style="left:328px;top:214px;width:1222px;height:1px;background:#2c2e30;"></div>
<div class="a" style="left:330px;top:216px;width:1205px;height:552px;background:#2e3032;"></div>
<div class="a" style="left:332px;top:218px;width:54px;height:530px;background:#efefef;"></div>
<div class="a" style="left:386px;top:218px;width:1px;height:530px;background:#9a9a9a;"></div>
<div class="a" style="left:387px;top:218px;width:1134px;height:530px;background:#ffffff;"></div>
<div class="a" style="left:1521px;top:218px;width:12px;height:530px;background:#d8d8d8;"></div>
<div class="a" style="left:1522px;top:219px;width:10px;height:65px;background:#c4c4c4;"></div>
<div class="a" style="left:1533px;top:216px;width:15px;height:552px;background:linear-gradient(to right,#45494b,#52565a);"></div>
<div class="a" style="left:1040px;top:218px;width:1px;height:530px;background:#c8c8c8;"></div>
<div class="a" style="left:399px;top:218px;width:1122px;height:15px;background:#a6c9ef;"></div>
<div class="a" style="left:399px;top:232px;width:1122px;height:1px;border-top:1px dashed #b01010"></div>
<div class="a" style="left:387px;top:218px;width:1134px;height:187px;overflow:hidden">
<div class="m" style="left:12px;top:1px"><span style="font-weight:bold;color:#000">procedure</span><span style="color:#4a4a4a"> TForm1.Button1Click(Sender: TObject);</span></div>
<div class="m" style="left:12px;top:17px">        <span style="color:#4a4a4a">processinputoptions</span><span style="color:#ff1a1a">;</span></div>
<div class="m" style="left:12px;top:33px">        <span style="color:#4a4a4a">process1</span><span style="color:#ff1a1a">.</span><span style="color:#4a4a4a">parameters</span><span style="color:#ff1a1a">.</span><span style="color:#4a4a4a">add</span><span style="color:#ff1a1a">(</span><span style="color:#1a3cff">&#x27;-i&#x27;</span><span style="color:#ff1a1a">);</span></div>
<div class="m" style="left:12px;top:49px">        <span style="color:#4a4a4a">detectdirmism</span><span style="color:#ff1a1a">:=</span><span style="color:#4a4a4a">false</span><span style="color:#ff1a1a">;</span></div>
<div class="m" style="left:12px;top:65px">        <span style="color:#4a4a4a">mtsconcat</span><span style="color:#ff1a1a">:=</span><span style="color:#1a3cff">&#x27;concat:&#x27;</span><span style="color:#ff1a1a">;</span></div>
<div class="m" style="left:12px;top:81px">      <span style="font-weight:bold;color:#0000d8">//  cmdline:=</span><span style="font-weight:bold;color:#0000d8;background:#e4e4e4;outline:1px solid #b8b8b8">ExtractFilepath</span><span style="font-weight:bold;color:#0000d8">( listbox1.Items.strings[0]);</span></div>
<div class="m" style="left:12px;top:97px">        <span style="font-weight:bold;color:#000">for</span><span style="color:#4a4a4a"> j</span><span style="color:#ff1a1a">:=</span><span style="color:#1a3cff">0</span><span style="font-weight:bold;color:#000"> to</span><span style="color:#4a4a4a"> listbox1</span><span style="color:#ff1a1a">.</span><span style="color:#4a4a4a">Items</span><span style="color:#ff1a1a">.</span><span style="color:#4a4a4a">count</span><span style="color:#ff1a1a">-</span><span style="color:#1a3cff">1</span><span style="font-weight:bold;color:#000"> do begin</span></div>
<div class="m" style="left:12px;top:113px">            <span style="color:#4a4a4a">mtsconcat</span><span style="color:#ff1a1a">:=</span><span style="color:#4a4a4a">mtsconcat</span><span style="color:#ff1a1a">+</span><span style="color:#4a4a4a"> listbox1</span><span style="color:#ff1a1a">.</span><span style="color:#4a4a4a">Items</span><span style="color:#ff1a1a">.</span><span style="color:#4a4a4a">strings</span><span style="color:#ff1a1a">[</span><span style="color:#4a4a4a">j</span><span style="color:#ff1a1a">]</span><span style="color:#4a4a4a"> </span><span style="color:#ff1a1a">+</span><span style="color:#4a4a4a"> </span><span style="color:#1a3cff">&#x27;|&#x27;</span><span style="color:#ff1a1a">;</span>  <span style="font-weight:bold;color:#0000d8">// ExtractFilename(listbox1.Items.strings[j]) + &#x27;|&#x27;;</span></div>
<div class="m" style="left:12px;top:129px">           <span style="font-weight:bold;color:#0000d8">// if (</span><span style="font-weight:bold;color:#0000d8;background:#e4e4e4;outline:1px solid #b8b8b8">ExtractFilepath</span><span style="font-weight:bold;color:#0000d8">(listbox1.Items.strings[j]) &lt;&gt; cmdline) Then detectdirmism:=true ;</span></div>
<div class="m" style="left:12px;top:145px">        <span style="font-weight:bold;color:#000">end</span><span style="color:#ff1a1a">;</span></div>
<div class="m" style="left:12px;top:161px">        <span style="color:#4a4a4a">delete</span><span style="color:#ff1a1a">(</span><span style="color:#4a4a4a">mtsconcat</span><span style="color:#ff1a1a">,</span><span style="color:#4a4a4a">length</span><span style="color:#ff1a1a">(</span><span style="color:#4a4a4a">mtsconcat</span><span style="color:#ff1a1a">),</span><span style="color:#1a3cff">1</span><span style="color:#ff1a1a">);</span></div>
<div class="m" style="left:12px;top:177px">        <span style="color:#4a4a4a">process1</span><span style="color:#ff1a1a">.</span><span style="color:#4a4a4a">parameters</span><span style="color:#ff1a1a">.</span><span style="color:#4a4a4a">add</span><span style="color:#ff1a1a">(</span><span style="color:#4a4a4a">mtsconcat</span><span style="color:#ff1a1a">);</span></div>
<div class="a" style="left:5px;top:16px;width:1px;height:64px;background:#b0b0b0"></div>
<div class="a" style="left:5px;top:109px;width:1px;height:22px;background:#b0b0b0"></div>
<div class="a" style="left:5px;top:145px;width:1px;height:15px;background:#b0b0b0"></div>
<div class="a" style="left:5px;top:162px;width:1px;height:25px;background:#b0b0b0"></div>
<div class="a" style="left:5px;top:159px;width:6px;height:1px;background:#b0b0b0"></div>
<div class="a" style="left:1px;top:83px;width:9px;height:9px;background:#fff;border:1px solid #b8b8b8"></div>
<div class="a" style="left:5px;top:87px;width:1px;height:1px;background:#888"></div>
<div class="a" style="left:1px;top:99px;width:9px;height:9px;background:#fff;border:1px solid #b8b8b8"></div>
<div class="a" style="left:3px;top:103px;width:5px;height:1px;background:#888"></div>
<div class="a" style="left:1px;top:131px;width:9px;height:9px;background:#fff;border:1px solid #b8b8b8"></div>
<div class="a" style="left:5px;top:135px;width:1px;height:1px;background:#888"></div>
</div>
<div class="a" style="left:332px;top:218px;width:54px;height:187px;overflow:hidden">
<div class="a" style="left:43px;top:26px;width:2px;height:2px;background:#333"></div>
<div class="a" style="left:43px;top:42px;width:2px;height:2px;background:#333"></div>
<div class="m" style="left:23.5px;top:49px;color:#444">255</div>
<div class="a" style="left:43px;top:74px;width:2px;height:2px;background:#333"></div>
<div class="a" style="left:43px;top:90px;width:2px;height:2px;background:#333"></div>
<div class="a" style="left:43px;top:106px;width:2px;height:2px;background:#333"></div>
<div class="a" style="left:43px;top:122px;width:2px;height:2px;background:#333"></div>
<div class="m" style="left:23.5px;top:129px;color:#444">260</div>
<div class="a" style="left:43px;top:154px;width:2px;height:2px;background:#333"></div>
<div class="a" style="left:43px;top:170px;width:2px;height:2px;background:#333"></div>
<div class="a" style="left:43px;top:186px;width:2px;height:2px;background:#333"></div>
</div>
<div class="a" style="left:330px;top:748px;width:23px;height:18px;background:#45494b;"></div>
<div class="a" style="left:334px;top:751px;width:30px;height:11px;background:#3c4042;border:1px solid #2c2e30;border-radius:5px"></div>
<div class="a" style="left:328px;top:767px;width:25px;height:1px;background:#2c2e30;"></div>
<div class="t" style="left:345.5px;top:773.4px;font-size:16.5px;">2</div>
<svg class="a" style="left:335px;top:803px;" width="10" height="10" viewBox="0 0 10 10"><path d="M1.5 1.5L8.5 8.5M8.5 1.5L1.5 8.5" stroke="#000" stroke-width="2.6"/></svg>
<div class="hb" style="left:329px;top:817px;width:23px;height:220px"></div>
<div class="a" style="left:353px;top:997px;width:1197px;height:40px;background:#2e3032;"></div>
<div class="a" style="left:1534px;top:997px;width:15px;height:40px;background:linear-gradient(to right,#45494b,#52565a);"></div>
<div class="a" style="left:1537px;top:997px;width:9px;height:37px;background:#3c4042;border:1px solid #2c2e30;border-radius:5px"></div>
<div class="a" style="left:353px;top:1036px;width:1197px;height:2px;background:#45494b;"></div>
<div class="a" style="left:1550px;top:128px;width:370px;height:1px;background:#2e3032;"></div>
<div class="hb" style="left:1561px;top:130px;width:58px;height:24px"></div>
<div class="t" style="left:1623.3px;top:133.7px;font-size:17.05px;">Kódböngésző, Komponensek</div>
<div class="hb" style="left:1850px;top:130px;width:55px;height:24px"></div>
<svg class="a" style="left:1907px;top:137px;" width="11" height="11" viewBox="0 0 11 11"><path d="M1.5 1.5L9.5 9.5M9.5 1.5L1.5 9.5" stroke="#000" stroke-width="2.6"/></svg>
<div class="tab" style="left:1562px;top:155px;width:117px;height:36px;background:#3c3f41;border-color:#2a2c2e"></div>
<div class="t" style="left:1568.3px;top:165.7px;font-size:17px;color:#ececec;">Kódböngésző</div>
<div class="tab" style="left:1682px;top:158px;width:123px;height:32px;background:#383b3d"></div>
<div class="t" style="left:1689.3px;top:167.7px;font-size:17px;color:#c8c8c8;">Komponensek</div>
<div class="a" style="left:1562px;top:190px;width:358px;height:848px;background:#3b3e40;border:1px solid #2c2e30;border-top-color:#45494b"></div>
<div class="tab" style="left:1565px;top:194px;width:42px;height:35px;background:#3e4143;border-color:#2a2c2e"></div>
<div class="t" style="left:1570.5px;top:203.2px;font-size:17px;color:#ececec;">Kód</div>
<div class="tab" style="left:1611px;top:197px;width:89px;height:32px;background:#3a3d3f"></div>
<div class="t" style="left:1617.5px;top:205.7px;font-size:17px;color:#c8c8c8;">Direktívák</div>
<div class="a" style="left:1565px;top:229px;width:351px;height:808px;background:#3e4143;border:1px solid #2c2e30;border-top-color:#45494b"></div>
<div class="fld" style="left:1568px;top:232px;width:249px;height:31px"></div>
<div class="t" style="left:1572px;top:239.7px;font-size:17px;color:#8a8a8a;">(szűrő)</div>
<div class="a" style="left:1821px;top:232px;width:21px;height:31px;background:#393c3e;border:1px solid #2e3032;border-radius:3px"></div>
<svg class="a" style="left:1823px;top:239px;" width="18" height="18" viewBox="0 0 18 18"><path d="M2 2h12l-4.5 5.5v6l-3-1.5v-4.5z" fill="#c8c8c8"/><path d="M12 12l4 4M16 12l-4 4" stroke="#888" stroke-width="1.1"/></svg>
<svg class="a" style="left:1848px;top:239px;" width="16" height="16" viewBox="0 0 16 16"><path d="M2.5 7a5.5 5.5 0 0 1 10-3" stroke="#f01010" stroke-width="1.9" fill="none"/><path d="M10 1.5h4.5V6z" fill="#f01010"/><path d="M13.5 9a5.5 5.5 0 0 1-10 3" stroke="#2a7af5" stroke-width="1.9" fill="none"/><path d="M6 14.5H1.5V10z" fill="#2a7af5"/></svg>
<svg class="a" style="left:1872px;top:240px;" width="13" height="15" viewBox="0 0 13 15"><rect x="0.7" y="0.7" width="11.5" height="13.5" fill="#fff" stroke="#3a83f5" stroke-width="1.2"/><path d="M3 4h1M3 7h1M3 10h1" stroke="#e00" stroke-width="1.4"/><path d="M5.5 4h4.5M5.5 7h4.5M5.5 10h4.5" stroke="#999" stroke-width="0.9"/></svg>
<svg class="a" style="left:1894px;top:239px;" width="17" height="17" viewBox="0 0 17 17"><path d="M2 15L10 7" stroke="#2a7af5" stroke-width="2"/><path d="M3 2l11 11" stroke="#e01010" stroke-width="2.4"/><circle cx="13" cy="4" r="2.8" fill="none" stroke="#ddd" stroke-width="1.8"/></svg>
<div class="a" style="left:1568px;top:266px;width:345px;height:766px;background:#2b2d2f;"></div>
<div class="a" style="left:1898px;top:266px;width:15px;height:751px;background:linear-gradient(to right,#45494b,#52565a);"></div>
<div class="a" style="left:1902px;top:392px;width:9px;height:414px;background:#3c4042;border:1px solid #2c2e30;border-radius:5px"></div>
<div class="a" style="left:1568px;top:1017px;width:330px;height:15px;background:#45494b;"></div>
<div class="a" style="left:1571px;top:1019px;width:141px;height:11px;background:#3c4042;border:1px solid #2c2e30;border-radius:5px"></div>
<div class="a" style="left:1898px;top:1017px;width:15px;height:15px;background:#3a3d3f;"></div>
<div class="a" style="left:1575px;top:267px;width:1px;height:750px;border-left:1px dotted #2a5a9a"></div>
<div class="a" style="left:1605px;top:267px;width:1px;height:750px;border-left:1px dotted #2a5a9a"></div>
<div class="a" style="left:1568px;top:266px;width:330px;height:751px;overflow:hidden">
<div class="a" style="left:39px;top:11px;width:6px;height:0;border-top:1px dotted #2a5a9a"></div>
<svg class="a" style="left:47px;top:6px;" width="14" height="10" viewBox="0 0 14 10"><path d="M1 4.5c0-2 3-3.5 6-3.5s6 .8 6 2.5v3c0 1.5-3 3-6 3s-6-.8-6-2.5z" fill="#1565c8"/><ellipse cx="7" cy="4" rx="3.3" ry="1.3" fill="#2b2d2f"/></svg>
<div class="t" style="left:66px;top:2.9px;font-size:16.6px;">BitBtn6</div>
<div class="a" style="left:39px;top:37px;width:6px;height:0;border-top:1px dotted #2a5a9a"></div>
<svg class="a" style="left:47px;top:32px;" width="14" height="10" viewBox="0 0 14 10"><path d="M1 4.5c0-2 3-3.5 6-3.5s6 .8 6 2.5v3c0 1.5-3 3-6 3s-6-.8-6-2.5z" fill="#1565c8"/><ellipse cx="7" cy="4" rx="3.3" ry="1.3" fill="#2b2d2f"/></svg>
<div class="t" style="left:66px;top:28.9px;font-size:16.6px;">Button1</div>
<div class="a" style="left:39px;top:63px;width:6px;height:0;border-top:1px dotted #2a5a9a"></div>
<svg class="a" style="left:47px;top:58px;" width="14" height="10" viewBox="0 0 14 10"><path d="M1 4.5c0-2 3-3.5 6-3.5s6 .8 6 2.5v3c0 1.5-3 3-6 3s-6-.8-6-2.5z" fill="#1565c8"/><ellipse cx="7" cy="4" rx="3.3" ry="1.3" fill="#2b2d2f"/></svg>
<div class="t" style="left:66px;top:54.9px;font-size:16.6px;">cancelling</div>
<div class="a" style="left:39px;top:89px;width:6px;height:0;border-top:1px dotted #2a5a9a"></div>
<svg class="a" style="left:47px;top:84px;" width="14" height="10" viewBox="0 0 14 10"><path d="M1 4.5c0-2 3-3.5 6-3.5s6 .8 6 2.5v3c0 1.5-3 3-6 3s-6-.8-6-2.5z" fill="#1565c8"/><ellipse cx="7" cy="4" rx="3.3" ry="1.3" fill="#2b2d2f"/></svg>
<div class="t" style="left:66px;top:80.9px;font-size:16.6px;">CheckBox1</div>
<div class="a" style="left:39px;top:115px;width:6px;height:0;border-top:1px dotted #2a5a9a"></div>
<svg class="a" style="left:47px;top:110px;" width="14" height="10" viewBox="0 0 14 10"><path d="M1 4.5c0-2 3-3.5 6-3.5s6 .8 6 2.5v3c0 1.5-3 3-6 3s-6-.8-6-2.5z" fill="#1565c8"/><ellipse cx="7" cy="4" rx="3.3" ry="1.3" fill="#2b2d2f"/></svg>
<div class="t" style="left:66px;top:106.9px;font-size:16.6px;">CheckBox2</div>
<div class="a" style="left:39px;top:141px;width:6px;height:0;border-top:1px dotted #2a5a9a"></div>
<svg class="a" style="left:47px;top:136px;" width="14" height="10" viewBox="0 0 14 10"><path d="M1 4.5c0-2 3-3.5 6-3.5s6 .8 6 2.5v3c0 1.5-3 3-6 3s-6-.8-6-2.5z" fill="#1565c8"/><ellipse cx="7" cy="4" rx="3.3" ry="1.3" fill="#2b2d2f"/></svg>
<div class="t" style="left:66px;top:132.9px;font-size:16.6px;">CheckBox3</div>
<div class="t" style="left:262px;top:652.9px;font-size:16.6px;">ct);</div>
<div class="t" style="left:262px;top:678.9px;font-size:16.6px;">ct);</div>
<div class="t" style="left:262px;top:704.9px;font-size:16.6px;">ct);</div>
<div class="a" style="left:62px;top:726px;width:232px;height:26px;background:#3189e6"></div>
<div class="t" style="left:65px;top:730.8px;font-size:16.7px;color:#fff;">Button1Click(Sender:TObject);</div>
<svg class="a" style="left:47px;top:731px;" width="15" height="16" viewBox="0 0 15 16"><path d="M7.5 1l6 3v7l-6 3-6-3V4z M1.5 4l6 3 6-3 M7.5 7v7" stroke="#1f5f9f" stroke-width="1.2" fill="none"/></svg>
<div class="a" style="left:39px;top:739px;width:6px;height:0;border-top:1px dotted #2a5a9a"></div>
</div>
<div class="a" style="left:353px;top:405px;width:1475px;height:592px;background:#3a3d3f;border-radius:7px 7px 0 0;box-shadow:0 0 0 1px rgba(20,20,22,0.7),0 0 12px 2px rgba(0,0,0,0.2)"></div>
<div class="a" style="left:353px;top:405px;width:1475px;height:34px;background:#3a3e40;border-radius:7px 7px 0 0"></div>
<div class="t" style="left:1002px;top:415.4px;font-size:16.6px;color:#a2a2a2;font-weight:bold;">Az én kis konverterem</div>
<div class="circ" style="left:1745px;top:415px;width:14px;height:14px;background:#888"></div>
<div class="circ" style="left:1775px;top:415px;width:14px;height:14px;background:#888"></div>
<div class="circ" style="left:1805px;top:415px;width:14px;height:14px;background:#888"></div>
<div class="a" style="left:353px;top:439px;width:1475px;height:1px;background:#0000f0;"></div>
<div class="a" style="left:353px;top:440px;width:1475px;height:1px;background:#0a0aa8;"></div>
<div class="a" style="left:353px;top:441px;width:2px;height:556px;background:#0000f0;"></div>
<div class="a" style="left:355px;top:441px;width:695px;height:453px;background:#2e2f31;"></div>
<div class="a" style="left:355px;top:894px;width:695px;height:16px;background:#3e4244;"></div>
<div class="a" style="left:358px;top:897px;width:690px;height:10px;background:#393c3e;border:1px solid #2a2c2e;border-radius:5px"></div>
<div class="a" style="left:1050px;top:441px;width:57px;height:470px;background-color:#141414;background-image:linear-gradient(to right,#3a3d3f 7px,transparent 7px),linear-gradient(to bottom,#3a3d3f 7px,transparent 7px);background-size:8px 8px;background-position:1px 6px"></div>
<div class="a" style="left:1092px;top:441px;width:15px;height:470px;background:#3a3d3f;"></div>
<div class="a" style="left:1050px;top:441px;width:42px;height:36px;background:#3a3d3f;"></div>
<div class="a" style="left:1053px;top:441px;width:39px;height:36px;background:#3b3e40;border:1px solid #2a2c2e;border-radius:3px"></div>
<svg class="a" style="left:1063px;top:447px;" width="18" height="22" viewBox="0 0 18 22"><path d="M9 1l8 8h-4.5v11h-7V9H1z" fill="#8ee08a"/></svg>
<div class="a" style="left:1053px;top:874px;width:39px;height:35px;background:#3b3e40;border:1px solid #2a2c2e;border-radius:3px"></div>
<svg class="a" style="left:1063px;top:879px;" width="18" height="22" viewBox="0 0 18 22"><path d="M9 21l8-8h-4.5V2h-7v11H1z" fill="#8ee08a"/></svg>
<div class="a" style="left:1107px;top:441px;width:721px;height:22px;background:#3a3d3f;"></div>
<div class="t" style="left:1106.3px;top:443.4px;font-size:16.6px;">FFMPEG monitor:</div>
<div class="a" style="left:1107px;top:463px;width:720px;height:533px;background:#000;"></div>
<div class="a" style="left:355px;top:910px;width:739px;height:1px;background:#10a010;"></div>
<div class="a" style="left:355px;top:911px;width:737px;height:86px;background-color:#141414;background-image:linear-gradient(to right,#3a3d3f 7px,transparent 7px),linear-gradient(to bottom,#3a3d3f 7px,transparent 7px);background-size:8px 8px;background-position:0px 0px"></div>
<div class="a" style="left:1092px;top:911px;width:15px;height:86px;background:#3a3d3f;"></div>
<div class="a" style="left:360px;top:923px;width:115px;height:26px;background:#3a3d3f;"></div>
<div class="a" style="left:362px;top:955px;width:107px;height:26px;background:#3a3d3f;"></div>
<div class="a" style="left:489px;top:955px;width:257px;height:26px;background:#3a3d3f;"></div>
<div class="a" style="left:757px;top:955px;width:257px;height:26px;background:#3a3d3f;"></div>
<div class="a" style="left:353px;top:438px;width:5px;height:5px;background:#000;"></div>
<div class="a" style="left:700px;top:438px;width:5px;height:5px;background:#000;"></div>
<div class="a" style="left:1048px;top:438px;width:5px;height:5px;background:#000;"></div>
<div class="a" style="left:353px;top:671px;width:5px;height:5px;background:#000;"></div>
<div class="a" style="left:353px;top:906px;width:5px;height:5px;background:#000;"></div>
<div class="a" style="left:700px;top:906px;width:5px;height:5px;background:#000;"></div>
<div class="a" style="left:1048px;top:906px;width:5px;height:5px;background:#000;"></div>
<div class="t" style="left:362.3px;top:930.4px;font-size:16.6px;">FFMpeg minta:</div>
<div class="a" style="left:475px;top:919.5px;width:397px;height:32px;background:#383b3d;border:1px solid #303234;border-radius:3px"></div>
<svg class="a" style="left:853px;top:927px;" width="10" height="17" viewBox="0 0 10 17"><path d="M1 5.5L5 1.5 9 5.5z M1 11.5L5 15.5 9 11.5z" fill="#777"/></svg>
<div class="a" style="left:883.5px;top:920px;width:53px;height:29px;background:#3b3e40;border:1px solid #2a2c2e;border-radius:3px"></div>
<svg class="a" style="left:900px;top:926px;" width="18" height="17" viewBox="0 0 18 17"><path d="M9 1v15M1.5 8.5h15" stroke="#a9c6ee" stroke-width="4"/></svg>
<div class="a" style="left:947.5px;top:920px;width:61px;height:29px;background:#3b3e40;border:1px solid #2a2c2e;border-radius:3px"></div>
<svg class="a" style="left:966px;top:923px;" width="22" height="22" viewBox="0 0 22 22"><path d="M3 19l13-13 3 3-13 13z" fill="#f2e030" stroke="#b89a10" stroke-width="0.8"/><path d="M16 6l2-2 3 3-2 2z" fill="#e02020"/><path d="M3 19l-1 3 3-1z" fill="#d8a870"/></svg>
<div class="a" style="left:1014.5px;top:920px;width:77px;height:29px;background:#3b3e40;border:1px solid #2a2c2e;border-radius:3px"></div>
<svg class="a" style="left:1039px;top:922px;" width="26" height="26" viewBox="0 0 26 26"><circle cx="11.5" cy="10.6" r="6.4" fill="#f0c400"/><circle cx="18.36" cy="11.99" r="2.1" fill="#f0c400"/><circle cx="15.37" cy="16.43" r="2.1" fill="#f0c400"/><circle cx="10.11" cy="17.46" r="2.1" fill="#f0c400"/><circle cx="5.67" cy="14.47" r="2.1" fill="#f0c400"/><circle cx="4.64" cy="9.21" r="2.1" fill="#f0c400"/><circle cx="7.63" cy="4.77" r="2.1" fill="#f0c400"/><circle cx="12.89" cy="3.74" r="2.1" fill="#f0c400"/><circle cx="17.33" cy="6.73" r="2.1" fill="#f0c400"/><circle cx="11.5" cy="10.6" r="2" fill="#3b3e40"/><rect x="11.5" y="10.5" width="13" height="12.5" fill="#fff" stroke="#3a6fd0" stroke-width="1"/><path d="M14.5 16.5l2.5 2.5 5-6" stroke="#000" stroke-width="1.7" fill="none"/></svg>
<div class="a" style="left:364px;top:959.5px;width:16px;height:16px;background:#e8e8e8;border-radius:3px;border:1px solid #bcbcbc"></div>
<div class="a" style="left:385px;top:955px;width:83px;height:26px;overflow:hidden">
<div class="t" style="left:0.6px;top:3.9px;font-size:16.6px;">Összefűzés</div>
</div>
<div class="a" style="left:492px;top:959.5px;width:16px;height:16px;background:#e8e8e8;border-radius:3px;border:1px solid #bcbcbc"></div>
<svg class="a" style="left:492px;top:959.5px;" width="16" height="16" viewBox="0 0 16 16"><path d="M3.5 8.5l3 3 6-7" stroke="#222" stroke-width="2.2" fill="none"/></svg>
<div class="t" style="left:512px;top:959.9px;font-size:16.6px;">Concat protocol  (  MTS|MTS  )</div>
<div class="a" style="left:760.5px;top:959.5px;width:16px;height:16px;background:#e8e8e8;border-radius:3px;border:1px solid #bcbcbc"></div>
<svg class="a" style="left:760.5px;top:959.5px;" width="16" height="16" viewBox="0 0 16 16"><path d="M3.5 8.5l3 3 6-7" stroke="#222" stroke-width="2.2" fill="none"/></svg>
<div class="a" style="left:780px;top:955px;width:233px;height:26px;overflow:hidden">
<div class="t" style="left:0px;top:4.9px;font-size:16.6px;">&#x27;.konvert.&#x27; hozzáadása a névhez</div>
</div>
<div class="a" style="left:1014.5px;top:957px;width:79px;height:26px;background:#3b3e40;border:1px solid #2a2c2e;border-radius:3px"></div>
<div class="t" style="left:1021.5px;top:962.1px;font-size:17.1px;">Konvert!</div>
<div class="a" style="left:817px;top:791px;width:93px;height:23px;background:#3b3e40;"></div>
<div class="t" style="left:817.5px;top:794.9px;font-size:16.6px;">SaveDialog1</div>
<div class="a" style="left:926px;top:791px;width:68px;height:23px;background:#3b3e40;"></div>
<div class="t" style="left:926.5px;top:794.9px;font-size:16.6px;">Process1</div>
<div class="a" style="left:823px;top:710px;width:220px;height:77px;background:#000;"></div>
<div class="t" style="left:827.5px;top:718.2px;font-size:15.9px;">ListBox1: TListBox</div>
<div class="t" style="left:827.5px;top:741.2px;font-size:15.9px;">Position: 0, 0; Size: 697 x 471</div>
<div class="t" style="left:827.5px;top:764.0px;font-size:16.3px;">TabStop: True; TabOrder: 1</div>
<div class="a" style="left:915px;top:513px;width:753px;height:199px;background:#3a3d3f;border-radius:7px 7px 0 0;box-shadow:0 0 0 1px rgba(20,20,22,0.7),0 0 12px 2px rgba(0,0,0,0.3)"></div>
<div class="a" style="left:915px;top:513px;width:753px;height:33px;background:#3a3e40;border-radius:7px 7px 0 0"></div>
<div class="t" style="left:1211.5px;top:522.1px;font-size:16.15px;color:#e4e4e4;font-weight:bold;">FFMpeg parancssor:</div>
<div class="circ" style="left:1585px;top:522px;width:14px;height:14px;background:#f2c61f"></div>
<div class="circ" style="left:1615px;top:522px;width:14px;height:14px;background:#3fc93f"></div>
<div class="circ" style="left:1645px;top:522px;width:14px;height:14px;background:#e8413c"></div>
<div class="a" style="left:915px;top:546px;width:753px;height:166px;background-color:#141414;background-image:linear-gradient(to right,#3a3d3f 7px,transparent 7px),linear-gradient(to bottom,#3a3d3f 7px,transparent 7px);background-size:8px 8px;background-position:1px 2px"></div>
<div class="a" style="left:919px;top:560px;width:47px;height:24px;background:#3a3d3f;"></div>
<div class="a" style="left:1063px;top:560px;width:85px;height:24px;background:#3a3d3f;"></div>
<div class="a" style="left:919px;top:594px;width:50px;height:28px;background:#3a3d3f;"></div>
<div class="a" style="left:1285px;top:594px;width:18px;height:28px;background:#3a3d3f;"></div>
<div class="a" style="left:1305px;top:594px;width:332px;height:28px;background:#3a3d3f;"></div>
<div class="a" style="left:925px;top:672px;width:331px;height:28px;background:#3a3d3f;"></div>
<div class="a" style="left:1381px;top:672px;width:24px;height:28px;background:#3a3d3f;"></div>
<div class="a" style="left:1668px;top:546px;width:0px;height:0px;"></div>
<div class="t" style="left:923px;top:564.9px;font-size:16.6px;">ID:</div>
<div class="fld" style="left:969.5px;top:555.5px;width:77px;height:30px;background:#2f3133;border-radius:3px"></div>
<div class="a" style="left:969.5px;top:555.5px;width:77px;height:30px;border:2px solid #3a7fd0;border-radius:3px"></div>
<div class="a" style="left:973.0px;top:559.0px;width:38px;height:22.5px;background:#3189e6;"></div>
<div class="a" style="left:969.5px;top:555.5px;width:77px;height:30px;overflow:hidden">
<div class="t" style="left:4px;top:7.9px;font-size:16.6px;color:#fff;">Edit4</div>
</div>
<div class="a" style="left:1066px;top:560px;width:82px;height:26px;overflow:hidden">
<div class="t" style="left:1.3px;top:4.9px;font-size:16.6px;">Minta neve:</div>
</div>
<div class="fld" style="left:1148px;top:555.5px;width:489px;height:30px;background:#2f3133;border-radius:3px"></div>
<div class="a" style="left:1148px;top:555.5px;width:489px;height:30px;overflow:hidden">
<div class="t" style="left:4px;top:7.9px;font-size:16.6px;color:#e6e6e6;">Edit5</div>
</div>
<div class="a" style="left:922px;top:594px;width:47px;height:26px;overflow:hidden">
<div class="t" style="left:1px;top:4.9px;font-size:16.6px;">ffmpeg:</div>
</div>
<div class="fld" style="left:969px;top:593px;width:310px;height:30.5px;background:#2f3133;border-radius:3px"></div>
<div class="a" style="left:969px;top:593px;width:310px;height:30.5px;overflow:hidden">
<div class="t" style="left:4px;top:8.1px;font-size:16.6px;color:#e6e6e6;">Edit1</div>
</div>
<div class="t" style="left:1289px;top:598.9px;font-size:16.6px;">-i</div>
<div class="t" style="left:1309px;top:599.6px;font-size:15.2px;">[BEMENETI FÁJL KITÖLTÉSE AUTOMATIKUS]</div>
<div class="fld" style="left:924px;top:631px;width:735px;height:30px;background:#2f3133;border-radius:3px"></div>
<div class="a" style="left:924px;top:631px;width:735px;height:30px;overflow:hidden">
<div class="t" style="left:4px;top:7.9px;font-size:16.6px;color:#e6e6e6;">Edit2</div>
</div>
<div class="t" style="left:931px;top:678.6px;font-size:15.25px;">[KIMENETI FÁJL KITÖLTÉSE AUTOMATIKUS]</div>
<div class="fld" style="left:1284px;top:670.5px;width:42px;height:30px;background:#2f3133;border-radius:3px"></div>
<div class="a" style="left:1284px;top:670.5px;width:40px;height:30px;overflow:hidden">
<div class="t" style="left:4px;top:7.9px;font-size:16.6px;color:#e6e6e6;">Edit3</div>
</div>
<div class="t" style="left:1387px;top:679.4px;font-size:16.6px;">-y</div>
<div class="a" style="left:1476.5px;top:670px;width:87px;height:26.5px;background:#3b3e40;border:1px solid #2a2c2e;border-radius:3px"></div>
<svg class="a" style="left:1480px;top:676px;" width="14" height="14" viewBox="0 0 14 14"><path d="M4 0.5h6l3.5 3.5v6L10 13.5H4L0.5 10V4z" fill="#dc2a2a"/><path d="M4.3 4.3l5.4 5.4M9.7 4.3l-5.4 5.4" stroke="#fff" stroke-width="1.8"/></svg>
<div class="a" style="left:1497px;top:672px;width:63px;height:24px;overflow:hidden">
<div class="t" style="left:0.7px;top:2.9px;font-size:16.6px;">Mégsem</div>
</div>
<div class="a" style="left:1572.5px;top:670px;width:86.5px;height:26.5px;background:#3b3e40;border:1px solid #2a2c2e;border-radius:3px"></div>
<svg class="a" style="left:1595px;top:675px;" width="17" height="15" viewBox="0 0 17 15"><path d="M13 1h3v7H7v3.5L1 8l6-3.5V6.5h6z" fill="#7aaaf0"/></svg>
<div class="t" style="left:1616px;top:674.9px;font-size:16.6px;">Ok</div>
<div class="a" style="left:0px;top:1038px;width:1920px;height:1px;background:#3a3c3e;"></div>
<div class="a" style="left:0px;top:1039px;width:1920px;height:41px;background:#1c1c20;"></div>
<svg class="a" style="left:5px;top:1045px;" width="30" height="30" viewBox="0 0 30 30"><circle cx="15" cy="15" r="13" fill="none" stroke="#e0e0e0" stroke-width="2.6"/><path d="M4.5 21L14 10.5l1.2 2-3 7.5 7-8.5 7.5 8.5c-2 4-6.5 6.5-11 6.5s-9-2.5-11-5.5z" fill="#e0e0e0"/></svg>
<div class="a" style="left:48px;top:1041px;width:1px;height:38px;background:#3a3a40;"></div>
<svg class="a" style="left:679px;top:1045px;" width="28" height="28" viewBox="0 0 28 28"><rect width="28" height="28" rx="6" fill="#f0a818"/><rect x="0" y="0" width="28" height="14" rx="6" fill="#f8c840"/><rect x="4" y="6" width="20" height="15" rx="1" fill="#f4f0e6"/><path d="M4 6l10 8 10-8" stroke="#b0a890" stroke-width="0.9" fill="none"/></svg>
<div class="a" style="left:674px;top:1078px;width:38px;height:2px;background:#1e9be8;"></div>
<svg class="a" style="left:723px;top:1045px;" width="28" height="28" viewBox="0 0 28 28"><rect width="28" height="28" rx="6" fill="#6a9ad8"/><path d="M0 28V6a6 6 0 0 1 6-6h22L14 14z" fill="#4f80c0"/><path d="M28 8v14a6 6 0 0 1-6 6H12l10-14z" fill="#b8d0f0"/><circle cx="14" cy="14" r="7" fill="#3c78d0" stroke="#e8f0ff" stroke-width="1.6"/></svg>
<div class="a" style="left:718px;top:1078px;width:38px;height:2px;background:#1e9be8;"></div>
<svg class="a" style="left:767px;top:1045px;" width="28" height="28" viewBox="0 0 28 28"><path d="M1 4h10l2 2h14v21H1z" fill="#e8b050"/><rect x="2" y="7" width="24" height="3" fill="#f0f0f0"/><rect x="1" y="9" width="27" height="18" rx="1" fill="#f6c870"/></svg>
<div class="a" style="left:762px;top:1078px;width:38px;height:2px;background:#1e9be8;"></div>
<svg class="a" style="left:811px;top:1045px;" width="28" height="28" viewBox="0 0 28 28"><rect width="28" height="28" rx="6" fill="#1ec45a"/><path d="M6 10c6-2 11-1.5 16 1M7 14.5c5-1.5 9-1 13 1M8 19c4-1 7-.7 10 .8" stroke="#111" stroke-width="2.3" fill="none" stroke-linecap="round"/></svg>
<svg class="a" style="left:855px;top:1045px;" width="28" height="28" viewBox="0 0 28 28"><rect width="28" height="28" rx="6" fill="#2a2a2c"/><circle cx="14" cy="14" r="9.5" fill="none" stroke="#ddd" stroke-width="1.4"/><path d="M14 5c-3 2-3 5 0 8M22 18c-3-1.5-6-1-8-4M6 18c3-.5 5.5-2 8-5" stroke="#ddd" stroke-width="1.3" fill="none"/></svg>
<svg class="a" style="left:899px;top:1045px;" width="28" height="28" viewBox="0 0 28 28"><defs><clipPath id="cdc"><rect width="28" height="28" rx="6"/></clipPath></defs><g clip-path="url(#cdc)"><rect width="28" height="28" fill="#c8281a"/><circle cx="3" cy="14" r="9" fill="#f2f2f2"/><circle cx="3" cy="14" r="5" fill="#c8281a"/><circle cx="25" cy="14" r="9" fill="#f2f2f2"/><circle cx="25" cy="14" r="5" fill="#c8281a"/><rect x="0" y="0" width="2" height="28" fill="#c8281a"/><rect x="26" y="0" width="2" height="28" fill="#c8281a"/></g></svg>
<svg class="a" style="left:943px;top:1045px;" width="28" height="28" viewBox="0 0 28 28"><rect width="28" height="28" rx="6" fill="#e04a30"/><path d="M4 14c3-5 8-8 12-6l5-4 1 6c2 3 1 7-2 9l2 6-6-4c-4 1-9-1-12-7z" fill="#f4f4f4"/><circle cx="14" cy="12" r="1.5" fill="#c03020"/><circle cx="19" cy="12" r="1.5" fill="#c03020"/></svg>
<div class="a" style="left:985px;top:1043px;width:32px;height:32px;background:#242428;"></div>
<svg class="a" style="left:987px;top:1045px;" width="28" height="28" viewBox="0 0 28 28"><path d="M7 13a7 7 0 0 1 12-5" stroke="#f0a030" stroke-width="2" fill="none"/><path d="M17 4l4 4-5 1z" fill="#f0a030"/><path d="M21 15a7 7 0 0 1-12 5" stroke="#f0a030" stroke-width="2" fill="none"/><path d="M11 24l-4-4 5-1z" fill="#f0a030"/><circle cx="14" cy="14" r="1.6" fill="#f0a030"/></svg>
<svg class="a" style="left:1031px;top:1045px;" width="28" height="28" viewBox="0 0 28 28"><rect width="28" height="28" rx="6" fill="#2a2a2c" stroke="#111" stroke-width="1"/><text x="4" y="11" font-family="Liberation Mono" font-size="9" fill="#eee">$_</text></svg>
<div class="a" style="left:1026px;top:1078px;width:38px;height:2px;background:#1e9be8;"></div>
<svg class="a" style="left:1075px;top:1045px;" width="28" height="28" viewBox="0 0 28 28"><rect width="28" height="28" rx="6" fill="#d8d8d8"/><path d="M5 11h4l5-4v14l-5-4H5z" fill="#777"/><path d="M17 9l4-4M17 14h6M17 19l4 4" stroke="#777" stroke-width="1.6"/></svg>
<svg class="a" style="left:1119px;top:1045px;" width="28" height="28" viewBox="0 0 28 28"><rect width="28" height="28" rx="6" fill="#1c2a48" stroke="#c0a040" stroke-width="1"/><circle cx="14" cy="9.5" r="3.8" fill="#30c0f0"/><circle cx="9" cy="17.5" r="3.8" fill="#d8e030"/><circle cx="19" cy="17.5" r="3.8" fill="#f05060"/></svg>
<svg class="a" style="left:1163px;top:1045px;" width="28" height="28" viewBox="0 0 28 28"><rect width="28" height="28" rx="6" fill="#4a4a4e"/><path d="M14 0v28M0 14h28" stroke="#2a2a2e" stroke-width="1.2"/><path d="M14 14h14v8a6 6 0 0 1-6 6h-8z" fill="#f07020"/><path d="M5 7h5M7.5 4.5v5M18 7h5M5 18.5l4 4M9 18.5l-4 4M18 19.5h5M18 22h5" stroke="#eee" stroke-width="1.4"/></svg>
<div class="a" style="left:1202px;top:1040px;width:38px;height:40px;background:#2a2a30;"></div>
<svg class="a" style="left:1207px;top:1045px;" width="28" height="28" viewBox="0 0 28 28"><rect width="28" height="28" rx="6" fill="#1d4f8e"/><path d="M5 18c2-4 5-5 9-5s7 1 9 5c1 3-1 5-4 5-2 0-3-1-5-1s-3 1-5 1c-3 0-5-2-4-5z" fill="#f2f2f2"/><ellipse cx="6" cy="11" rx="2" ry="3" fill="#f2f2f2"/><ellipse cx="11" cy="7" rx="2" ry="3" fill="#f2f2f2"/><ellipse cx="17" cy="7" rx="2" ry="3" fill="#f2f2f2"/><ellipse cx="22" cy="11" rx="2" ry="3" fill="#f2f2f2"/></svg>
<div class="a" style="left:1202px;top:1078px;width:38px;height:2px;background:#1e9be8;"></div>
<svg class="a" style="left:1202px;top:1040px;" width="18" height="18" viewBox="0 0 18 18"><circle cx="9" cy="8.5" r="8" fill="#1e9be8"/><text x="9" y="13" font-family="Liberation Sans" font-size="12" text-anchor="middle" fill="#fff">3</text></svg>
<svg class="a" style="left:1479px;top:1047px;" width="26" height="26" viewBox="0 0 26 26"><circle cx="12.5" cy="12" r="12" fill="#5a5a5a"/><path d="M3 22l3-3 3 1z" fill="#5a5a5a"/><path d="M6 11c2-1 6-1 9-1l2-3 1.5-.5 1 2-1 2v2l-1 5h-1l-.5-4h-5l-.5 4h-1l-.5-4c-1 0-2.5-1-2.5-2.5z" fill="#f0f0f0"/></svg>
<svg class="a" style="left:1517px;top:1047px;" width="22" height="25" viewBox="0 0 22 25"><ellipse cx="9" cy="11" rx="8" ry="11" fill="#3a7ad8"/><path d="M5 7l7 7-3 3V5l3 3-7 7" stroke="#fff" stroke-width="1.3" fill="none"/><rect x="11" y="15" width="8" height="8" fill="#e02020"/><path d="M13 17l4 4M17 17l-4 4" stroke="#fff" stroke-width="1"/></svg>
<svg class="a" style="left:1548px;top:1048px;" width="22" height="22" viewBox="0 0 22 22"><circle cx="11" cy="11" r="11" fill="#d81e2c"/><path d="M5.5 15V7l5.5 5 5.5-5v8" stroke="#fff" stroke-width="2.2" fill="none"/></svg>
<svg class="a" style="left:1582px;top:1046px;" width="26" height="26" viewBox="0 0 26 26"><path d="M3 14c-2-4 2-8 6-6 2-4 8-4 10 0 3-1 6 2 5 5 2 2 0 6-3 5H6c-2 0-4-2-3-4z" fill="#f0a030"/><path d="M16 21l2 2 4-4" stroke="#ccc" stroke-width="1.2" fill="none"/></svg>
<svg class="a" style="left:1617px;top:1046px;" width="22" height="26" viewBox="0 0 22 26"><path d="M3 2h14l2 4v11H1V6z" fill="#e8e8e8"/><rect x="2" y="3" width="16" height="11" fill="#f4f4f4"/><path d="M5 8c2-3 4-2 5-1s3 1 4-1M9 6l2 4" stroke="#222" stroke-width="2" fill="none"/><rect x="1" y="14" width="18" height="1.5" fill="#555"/><rect x="15" y="11" width="3" height="7" rx="1" fill="#f07828"/><rect x="15" y="19" width="3" height="3" rx="1" fill="#f07828"/></svg>
<svg class="a" style="left:1651px;top:1051px;" width="15" height="18" viewBox="0 0 15 18"><path d="M2 1.5h10.5a1 1 0 0 1 1 1v9.5l-4 4H2a1 1 0 0 1-1-1v-12.5a1 1 0 0 1 1-1z" fill="none" stroke="#eee" stroke-width="1.5"/><path d="M4 5h7M4 8h7M4 11h5" stroke="#eee" stroke-width="1.6"/></svg>
<svg class="a" style="left:1678px;top:1051px;" width="18" height="17" viewBox="0 0 18 17"><path d="M2 12c2-1 3-3 3.5-6 .5-2.5 2.5-4 5-3.5 2.5.5 3.5 3 3 5.5-.5 3 0 5 1 6.5z" fill="#e6e6e6"/><circle cx="13.5" cy="3.5" r="3" fill="#e6e6e6"/><path d="M8 15.5a2 1.5 0 0 0 3 0" fill="#e6e6e6"/></svg>
<div class="t" style="left:1701px;top:1051.7px;font-size:17px;color:#e8e8e8;font-weight:bold;">7</div>
<svg class="a" style="left:1721px;top:1051px;" width="17" height="17" viewBox="0 0 17 17"><rect x="1" y="2" width="15" height="13" rx="2" fill="none" stroke="#ddd" stroke-width="1.5"/><path d="M3 11.5h11" stroke="#ddd" stroke-width="1.5"/></svg>
<div class="t" style="left:1748px;top:1051.7px;font-size:17px;color:#e0e6f0;font-weight:bold;">hu</div>
<svg class="a" style="left:1780px;top:1051px;" width="18" height="15" viewBox="0 0 18 15"><path d="M1 6a11 11 0 0 1 16 0M3.5 9a7.5 7.5 0 0 1 11 0M6 12a4 4 0 0 1 6 0" stroke="#eee" stroke-width="1.8" fill="none"/><circle cx="9" cy="13.5" r="1.3" fill="#eee"/></svg>
<svg class="a" style="left:1807px;top:1051px;" width="15" height="17" viewBox="0 0 15 17"><path d="M1 6h3l5-4v13l-5-4H1z" fill="#eee"/><path d="M11 6c1.5 1.5 1.5 3.5 0 5" stroke="#eee" stroke-width="1.4" fill="none"/></svg>
<svg class="a" style="left:1836px;top:1049px;" width="17" height="21" viewBox="0 0 17 21"><rect x="2" y="3" width="12" height="17" rx="2" fill="none" stroke="#ddd" stroke-width="1.6"/><rect x="5" y="1" width="6" height="2.5" fill="#ddd"/><path d="M9 8l-3 5h4l-2 5" stroke="#ddd" stroke-width="1.4" fill="none"/></svg>
<div class="t" style="left:1864px;top:1051.7px;font-size:17px;color:#dde4f0;font-weight:bold;">14:37</div>
<div class="a" style="left:1912px;top:1039px;width:8px;height:41px;background:#26262a;"></div>
</body></html>
